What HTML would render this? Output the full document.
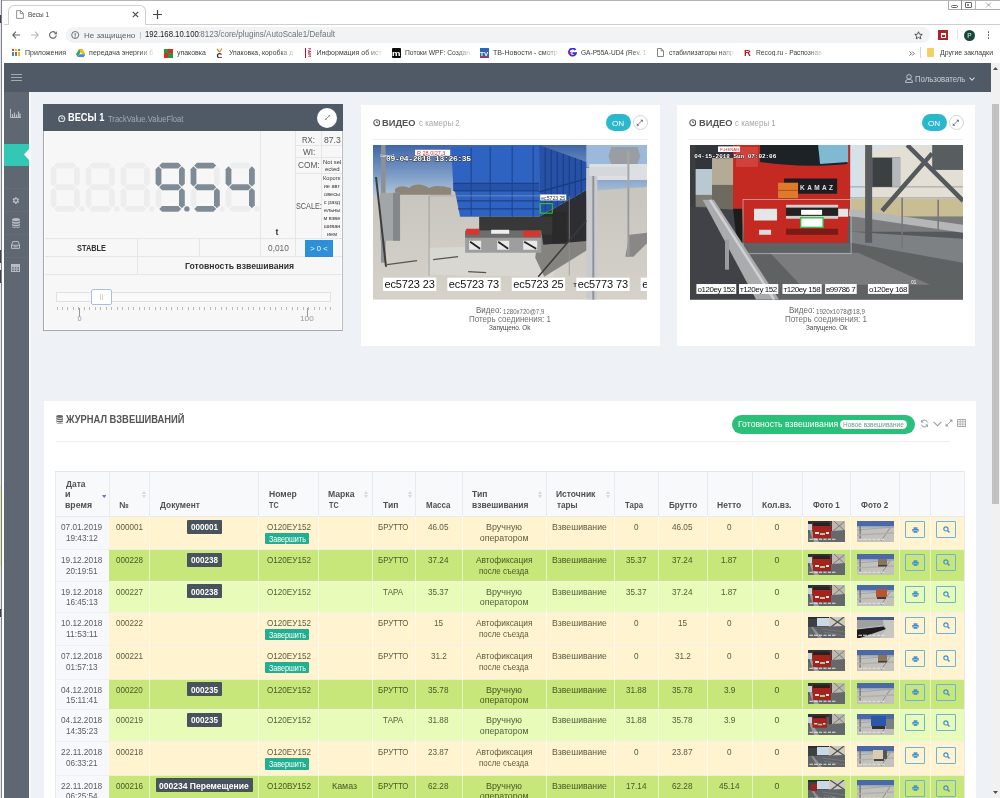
<!DOCTYPE html><html><head><meta charset="utf-8"><title>Весы 1</title><style>
*{margin:0;padding:0;box-sizing:border-box}
html,body{width:1000px;height:798px;overflow:hidden;background:#fff;font-family:"Liberation Sans",sans-serif;position:relative}
.abs{position:absolute}
.t{position:absolute;white-space:nowrap;line-height:1}
</style></head><body>
<svg width="0" height="0" style="position:absolute"><filter id="soft" x="0" y="0" width="100%" height="100%"><feGaussianBlur stdDeviation="0.4"/></filter></svg><div id="root" style="position:absolute;left:0;top:0;width:1000px;height:798px;overflow:hidden;filter:url(#soft)">
<div class="abs" style="left:0;top:0;width:1.2px;height:798px;background:#e6e6ee"></div>
<div class="abs" style="left:0;top:486px;width:1.2px;height:80px;background:#d8eca0"></div>
<div class="abs" style="left:0;top:15px;width:1.2px;height:8px;background:#3c3f58"></div>
<div class="abs" style="left:0;top:250px;width:1.2px;height:13px;background:#3c3f58"></div>
<div class="abs" style="left:0;top:270px;width:1.2px;height:13px;background:#3c3f58"></div>
<div class="abs" style="left:0;top:609px;width:1.2px;height:8px;background:#3c3f58"></div>
<div class="abs" style="left:1.2px;top:0;width:0.9px;height:798px;background:#7d8088"></div>
<div class="abs" style="left:2px;top:0;width:998px;height:1px;background:#b4b4b4"></div>
<div class="abs" style="left:8px;top:5px;width:138px;height:20px;border:1px solid #cfcfcf;border-bottom:none;border-radius:6px 6px 0 0;background:#fff"></div>
<div class="abs" style="left:4px;top:24px;width:5px;height:1px;background:#cfcfcf"></div>
<div class="abs" style="left:145px;top:24px;width:855px;height:1px;background:#cfcfcf"></div>
<svg class="abs" style="left:16px;top:10px" width="8" height="9" viewBox="0 0 8 9"><path d="M0.6 0.6h4l2.8 2.8v5h-6.8z M4.4 0.6v3h3" fill="none" stroke="#888" stroke-width="0.9"/></svg>
<div class="t" style="left:28.48px;top:11.06px;font-size:7.2px;color:#444;font-weight:normal;transform:scaleX(0.895);transform-origin:0 0;">Весы 1</div>
<svg class="abs" style="left:132px;top:11px" width="7" height="7" viewBox="0 0 7 7"><path d="M0.8 0.8l5.4 5.4M6.2 0.8L0.8 6.2" stroke="#444" stroke-width="1.1"/></svg>
<svg class="abs" style="left:153px;top:10px" width="9" height="9" viewBox="0 0 9 9"><path d="M4.5 0v9M0 4.5h9" stroke="#444" stroke-width="1.2"/></svg>
<div class="abs" style="left:947.5px;top:1px;width:53px;height:8.5px;border:1px solid #a9a9a9;border-top:none;border-right:none;background:#fff"></div>
<div class="abs" style="left:961px;top:0;width:1px;height:9.5px;background:#8a8a8a"></div>
<div class="abs" style="left:975px;top:0;width:1px;height:9.5px;background:#b5b5b5"></div>
<div class="abs" style="left:951px;top:5px;width:7px;height:2.6px;border:1px solid #666;border-radius:2px"></div>
<div class="abs" style="left:965px;top:2px;width:7px;height:5.5px;border:1px solid #666;border-radius:1px"></div>
<div class="abs" style="left:967px;top:3.5px;width:2px;height:2.5px;background:#888"></div>
<svg class="abs" style="left:984.5px;top:2px" width="7" height="6" viewBox="0 0 7 6"><path d="M0.8 0.6l5.4 4.8M6.2 0.6L0.8 5.4" stroke="#777" stroke-width="0.9" stroke-dasharray="1 0.6"/></svg>
<svg class="abs" style="left:12px;top:31px" width="8" height="8" viewBox="0 0 8 8"><path d="M8 4H1M4 0.6L0.7 4 4 7.4" fill="none" stroke="#5f6368" stroke-width="1.1"/></svg>
<svg class="abs" style="left:30.5px;top:31px" width="8" height="8" viewBox="0 0 8 8"><path d="M0 4h7M4 0.6L7.3 4 4 7.4" fill="none" stroke="#b5b7ba" stroke-width="1.1"/></svg>
<svg class="abs" style="left:48.5px;top:31px" width="8.5" height="8" viewBox="0 0 8.5 8"><path d="M7.2 4.2a3.3 3.3 0 1 1-1-2.6" fill="none" stroke="#5f6368" stroke-width="1.1"/><path d="M7.8 0.2v3H4.8z" fill="#5f6368"/></svg>
<div class="abs" style="left:65.5px;top:26.8px;width:864px;height:16px;border-radius:8px;background:#f1f3f4"></div>
<svg class="abs" style="left:71px;top:31px" width="9" height="8" viewBox="0 0 9 8"><circle cx="4.2" cy="4" r="3.5" fill="none" stroke="#5f6368" stroke-width="0.9"/><path d="M4.2 2.2v2.6" stroke="#5f6368" stroke-width="1"/><circle cx="4.2" cy="5.9" r="0.55" fill="#5f6368"/></svg>
<div class="t" style="left:84.16px;top:31.89px;font-size:7.4px;color:#5f6368;font-weight:normal;transform:scaleX(1.080);transform-origin:0 0;">Не защищено</div>
<div class="abs" style="left:140px;top:31.5px;width:1px;height:7px;background:#c4c6c8"></div>
<div class="t" style="left:145.42px;top:31.11px;font-size:8.2px;color:#202124;font-weight:normal;transform:scaleX(0.945);transform-origin:0 0;">192.168.10.100</div>
<div class="t" style="left:198.47px;top:31.11px;font-size:8.2px;color:#6f7377;font-weight:normal;transform:scaleX(0.984);transform-origin:0 0;">:8123/core/plugins/AutoScale1/Default</div>
<svg class="abs" style="left:914px;top:31px" width="9" height="9" viewBox="0 0 24 24"><path d="M12 2l2.9 6.6 7.1.6-5.4 4.7 1.7 7-6.3-3.8-6.3 3.8 1.7-7L2 9.2l7.1-.6z" fill="none" stroke="#444" stroke-width="2.4"/></svg>
<div class="abs" style="left:938px;top:30px;width:10px;height:10px;background:#b0202c"></div>
<div class="abs" style="left:940.5px;top:32.5px;width:5px;height:5px;border:1px solid #fff;border-top-width:2px"></div>
<div class="abs" style="left:957px;top:30px;width:1px;height:9px;background:#e2e2e2"></div>
<div class="abs" style="left:964px;top:29.5px;width:11px;height:11px;border-radius:6px;background:#16493a"></div>
<div class="t" style="left:967.28px;top:32.55px;font-size:6.5px;color:#e8f0ec;font-weight:normal;">P</div>
<div class="abs" style="left:987.5px;top:31px;width:1.6px;height:1.6px;background:#555;border-radius:1px"></div>
<div class="abs" style="left:987.5px;top:34px;width:1.6px;height:1.6px;background:#555;border-radius:1px"></div>
<div class="abs" style="left:987.5px;top:37px;width:1.6px;height:1.6px;background:#555;border-radius:1px"></div>
<div class="abs" style="left:12px;top:49.0px;width:2px;height:2px;background:#ea4335"></div>
<div class="abs" style="left:15px;top:49.0px;width:2px;height:2px;background:#fbbc04"></div>
<div class="abs" style="left:18px;top:49.0px;width:2px;height:2px;background:#34a853"></div>
<div class="abs" style="left:12px;top:51.7px;width:2px;height:2px;background:#4285f4"></div>
<div class="abs" style="left:15px;top:51.7px;width:2px;height:2px;background:#ea4335"></div>
<div class="abs" style="left:18px;top:51.7px;width:2px;height:2px;background:#fbbc04"></div>
<div class="abs" style="left:12px;top:54.4px;width:2px;height:2px;background:#34a853"></div>
<div class="abs" style="left:15px;top:54.4px;width:2px;height:2px;background:#4285f4"></div>
<div class="abs" style="left:18px;top:54.4px;width:2px;height:2px;background:#fbbc04"></div>
<div class="t" style="left:25.04px;top:49.32px;font-size:7px;color:#3c3c3c;font-weight:normal;">Приложения</div>
<svg class="abs" style="left:75.5px;top:48.5px" width="9.5" height="8" viewBox="0 0 9.5 8"><path d="M3 0h3.5l3 5.2H6z" fill="#fbbc04"/><path d="M3 0L0 5.2 1.7 8 4.7 2.8z" fill="#34a853"/><path d="M1.7 8h6.1l1.7-2.8H3.4z" fill="#4285f4"/></svg>
<div class="t" style="left:89.11px;top:49.32px;font-size:7px;color:#3c3c3c;font-weight:normal;-webkit-mask-image:linear-gradient(to right,#000 78%,rgba(0,0,0,0.15));">передача энергии б</div>
<div class="abs" style="left:163.6px;top:48.5px;width:9px;height:9px;background:#e8262a"></div><div class="abs" style="left:163.6px;top:48.5px;width:4.5px;height:4.5px;background:#1f9d3a"></div><div class="abs" style="left:168.1px;top:53px;width:4.5px;height:4.5px;background:#1f9d3a"></div>
<div class="t" style="left:176.77px;top:49.32px;font-size:7px;color:#3c3c3c;font-weight:normal;transform:scaleX(0.993);transform-origin:0 0;">упаковка</div>
<svg class="abs" style="left:216px;top:47.5px" width="7" height="10" viewBox="0 0 7 10"><path d="M1 1l2.5 3M6 0.5L3.5 4" stroke="#d9822b" stroke-width="1.2"/><path d="M5.5 6.5a2.2 2.2 0 1 0 0 2.5" fill="none" stroke="#333" stroke-width="1.3"/></svg>
<div class="t" style="left:228.79px;top:49.32px;font-size:7px;color:#3c3c3c;font-weight:normal;transform:scaleX(0.982);transform-origin:0 0;-webkit-mask-image:linear-gradient(to right,#000 78%,rgba(0,0,0,0.15));">Упаковка, коробка д</div>
<div class="abs" style="left:305px;top:48px;width:5px;height:10px;border-left:1.5px solid #c8102e;"></div>
<div class="t" style="left:306.5px;top:48px;font-size:4px;color:#c8102e;writing-mode:vertical-rl;font-weight:bold">FAIR</div>
<div class="t" style="left:316.44px;top:49.32px;font-size:7px;color:#3c3c3c;font-weight:normal;-webkit-mask-image:linear-gradient(to right,#000 78%,rgba(0,0,0,0.15));">Информация об ист</div>
<div class="abs" style="left:391.5px;top:48px;width:9.5px;height:9.5px;background:#111;border-radius:1px"></div>
<div class="t" style="left:391.98px;top:49.88px;font-size:8px;color:#fff;font-weight:bold;transform:scaleX(1.193);transform-origin:0 0;">m</div>
<div class="t" style="left:404.66px;top:49.32px;font-size:7px;color:#3c3c3c;font-weight:normal;transform:scaleX(0.957);transform-origin:0 0;-webkit-mask-image:linear-gradient(to right,#000 78%,rgba(0,0,0,0.15));">Потоки WPF: Создан</div>
<div class="abs" style="left:479.5px;top:48px;width:9.5px;height:9.5px;background:#2e63b5"></div>
<div class="t" style="left:480.24px;top:50.97px;font-size:6px;color:#fff;font-weight:bold;transform:scaleX(1.058);transform-origin:0 0;">TV</div>
<div class="abs" style="left:479.5px;top:56.5px;width:9.5px;height:1px;background:#d22"></div>
<div class="t" style="left:493.06px;top:49.32px;font-size:7px;color:#3c3c3c;font-weight:normal;transform:scaleX(1.016);transform-origin:0 0;-webkit-mask-image:linear-gradient(to right,#000 78%,rgba(0,0,0,0.15));">ТВ-Новости - смотр</div>
<svg class="abs" style="left:568px;top:48px" width="9" height="9" viewBox="0 0 9 9"><path d="M7.5 2A3.6 3.6 0 1 0 8 5.2H4.5" fill="none" stroke="#3b2fe0" stroke-width="1.8"/><path d="M0.5 5.5l3-1" stroke="#e0203a" stroke-width="1.5"/></svg>
<div class="t" style="left:581.37px;top:49.32px;font-size:7px;color:#3c3c3c;font-weight:normal;transform:scaleX(0.937);transform-origin:0 0;-webkit-mask-image:linear-gradient(to right,#000 78%,rgba(0,0,0,0.15));">GA-P55A-UD4 (Rev. 1</div>
<svg class="abs" style="left:657px;top:48px" width="7" height="9" viewBox="0 0 7 9"><path d="M0.5 0.5h3.7l2.3 2.3v5.7h-6z M4.2 0.5v2.3h2.3" fill="none" stroke="#777" stroke-width="0.9"/></svg>
<div class="t" style="left:669.23px;top:49.32px;font-size:7px;color:#3c3c3c;font-weight:normal;transform:scaleX(0.969);transform-origin:0 0;-webkit-mask-image:linear-gradient(to right,#000 78%,rgba(0,0,0,0.15));">стабилизаторы напр</div>
<div class="t" style="left:743.89px;top:49.13px;font-size:9px;color:#c8141e;font-weight:bold;transform:scaleX(1.050);transform-origin:0 0;">R</div>
<div class="t" style="left:756.46px;top:49.32px;font-size:7px;color:#3c3c3c;font-weight:normal;transform:scaleX(0.957);transform-origin:0 0;-webkit-mask-image:linear-gradient(to right,#000 78%,rgba(0,0,0,0.15));">Recog.ru - Распознав</div>
<svg class="abs" style="left:909px;top:50.5px" width="6" height="5" viewBox="0 0 6 5"><path d="M0.5 0.5l2 2-2 2M3.2 0.5l2 2-2 2" fill="none" stroke="#555" stroke-width="0.9"/></svg>
<div class="abs" style="left:920px;top:47px;width:1px;height:11px;background:#d6d6d6"></div>
<div class="abs" style="left:926.5px;top:48.2px;width:7px;height:9px;background:#f5cf66;border-radius:1px"></div>
<div class="t" style="left:939.97px;top:49.32px;font-size:7px;color:#3c3c3c;font-weight:normal;transform:scaleX(0.988);transform-origin:0 0;">Другие закладки</div>
<div class="abs" style="left:4px;top:63px;width:987px;height:29px;background:#4f5a66"></div>
<div class="abs" style="left:11px;top:74px;width:11px;height:1px;background:#a3aab2"></div>
<div class="abs" style="left:11px;top:77px;width:11px;height:1px;background:#a3aab2"></div>
<div class="abs" style="left:11px;top:80px;width:11px;height:1px;background:#a3aab2"></div>
<svg class="abs" style="left:904.8px;top:74px" width="8" height="9" viewBox="0 0 9 10"><circle cx="4.5" cy="3.2" r="2.6" fill="none" stroke="#c9ced4" stroke-width="1"/><path d="M0.6 9.4c0-2.6 1.6-3.6 3.9-3.6s3.9 1 3.9 3.6z" fill="none" stroke="#c9ced4" stroke-width="1"/></svg>
<div class="t" style="left:914.88px;top:75.17px;font-size:8.6px;color:#c9ced4;font-weight:normal;transform:scaleX(0.904);transform-origin:0 0;">Пользователь</div>
<svg class="abs" style="left:969px;top:77px" width="6" height="4" viewBox="0 0 6 4"><path d="M0.5 0.6L3 3.2 5.5 0.6" fill="none" stroke="#c9ced4" stroke-width="1.1"/></svg>
<div class="abs" style="left:4px;top:92px;width:25px;height:706px;background:#5f6772"></div>
<div class="abs" style="left:29px;top:92px;width:2px;height:706px;background:#f7f8fa"></div>
<div class="abs" style="left:31px;top:92px;width:960px;height:706px;background:#eef1f5"></div>
<div class="abs" style="left:991px;top:63px;width:9px;height:735px;background:#f1f1f1"></div>
<div class="abs" style="left:992px;top:104px;width:7px;height:400px;background:#c1c1c1"></div>
<svg class="abs" style="left:993px;top:66.5px" width="5" height="3" viewBox="0 0 5 3"><path d="M0 3L2.5 0 5 3z" fill="#505050"/></svg>
<svg class="abs" style="left:993px;top:791px" width="5" height="3" viewBox="0 0 5 3"><path d="M0 0L2.5 3 5 0z" fill="#505050"/></svg>
<div class="abs" style="left:4px;top:92px;width:25px;height:0px"></div>
<svg class="abs" style="left:10px;top:109px" width="11" height="9" viewBox="0 0 11 9"><path d="M0.5 0v8.5H11" fill="none" stroke="#b9bec5" stroke-width="1"/><path d="M2.5 8V5M4.5 8V3.5M6.5 8V5.5M8.5 8V2.5M10 8V4.5" stroke="#b9bec5" stroke-width="1.2"/></svg>
<div class="abs" style="left:4px;top:143.5px;width:25px;height:22px;background:#33c8b3"></div>
<svg class="abs" style="left:24px;top:149px" width="5" height="11" viewBox="0 0 5 11"><path d="M5 0L0 5.5 5 11z" fill="#f3f5f8"/></svg>
<div class="abs" style="left:4px;top:188px;width:25px;height:1px;background:#656c75"></div>
<div class="abs" style="left:4px;top:211.4px;width:25px;height:1px;background:#656c75"></div>
<div class="abs" style="left:4px;top:234.4px;width:25px;height:1px;background:#656c75"></div>
<div class="abs" style="left:4px;top:257px;width:25px;height:1px;background:#656c75"></div>
<svg class="abs" style="left:11px;top:195.5px" width="9" height="9" viewBox="0 0 24 24"><path fill="#b9bec5" d="M19.4 13a7.5 7.5 0 0 0 0-2l2.1-1.6-2-3.5-2.5 1a7.3 7.3 0 0 0-1.7-1L15 3h-4l-.4 2.6a7.3 7.3 0 0 0-1.7 1l-2.5-1-2 3.5L6.5 11a7.5 7.5 0 0 0 0 2l-2.1 1.6 2 3.5 2.5-1a7.3 7.3 0 0 0 1.7 1L11 21h4l.4-2.6a7.3 7.3 0 0 0 1.7-1l2.5 1 2-3.5zM13 15.5a3.5 3.5 0 1 1 0-7 3.5 3.5 0 0 1 0 7z"/></svg>
<svg class="abs" style="left:11.5px;top:217.5px" width="8" height="10" viewBox="0 0 8 10"><ellipse cx="4" cy="1.6" rx="4" ry="1.6" fill="#b9bec5"/><path d="M0 2.6c0 .9 1.8 1.6 4 1.6s4-.7 4-1.6v1.6c0 .9-1.8 1.6-4 1.6S0 5.1 0 4.2z" fill="#b9bec5"/><path d="M0 5.2c0 .9 1.8 1.6 4 1.6s4-.7 4-1.6v1.6c0 .9-1.8 1.6-4 1.6S0 7.7 0 6.8z" fill="#b9bec5"/><path d="M0 7.8c0 .9 1.8 1.6 4 1.6s4-.7 4-1.6v.6c0 .9-1.8 1.6-4 1.6S0 9.3 0 8.4z" fill="#b9bec5"/></svg>
<svg class="abs" style="left:11px;top:241px" width="9" height="8" viewBox="0 0 9 8"><path d="M1.8 0.6h5.4L8.5 4v3.4H0.5V4z" fill="none" stroke="#b9bec5" stroke-width="1"/><path d="M0.5 4.2h8M2.5 5.8h4" stroke="#b9bec5" stroke-width="1"/></svg>
<svg class="abs" style="left:11px;top:264px" width="9" height="8" viewBox="0 0 9 8"><rect x="0.5" y="0.5" width="8" height="7" fill="none" stroke="#b9bec5" stroke-width="1"/><path d="M0.5 2.8h8M0.5 5.1h8M3.2 0.5v7M5.8 0.5v7" stroke="#b9bec5" stroke-width="1"/><rect x="0.5" y="0.5" width="8" height="2.3" fill="#b9bec5"/></svg>
<div class="abs" style="left:43px;top:104px;width:300px;height:227px;background:#f7f7f7;border:1px solid #a3a8ad;border-top:none;border-right-color:#b9bdc1"></div>
<div class="abs" style="left:44px;top:104px;width:298px;height:226px;border:1px solid #fff;border-top:none"></div>
<div class="abs" style="left:43px;top:104px;width:300px;height:27px;background:#4f5a66"></div>
<svg class="abs" style="left:58px;top:114.5px" width="7.5" height="7.5" viewBox="0 0 8 8"><circle cx="4" cy="4" r="3.2" fill="none" stroke="#e6e9ec" stroke-width="1.2"/><path d="M4 2.2V4h1.6" fill="none" stroke="#e6e9ec" stroke-width="1"/></svg>
<div class="t" style="left:67.90px;top:113.42px;font-size:10.2px;color:#ffffff;font-weight:bold;transform:scaleX(0.908);transform-origin:0 0;">ВЕСЫ 1</div>
<div class="t" style="left:107.85px;top:114.60px;font-size:8.8px;color:#9eabb8;font-weight:normal;transform:scaleX(0.863);transform-origin:0 0;">TrackValue.ValueFloat</div>
<div class="abs" style="left:317px;top:107.5px;width:20px;height:20px;border-radius:10px;background:#fff"></div>
<svg class="abs" style="left:323.5px;top:114px" width="7" height="7" viewBox="0 0 9 9"><path d="M1.5 7.5l6-6" stroke="#8a8a8a" stroke-width="1.1"/><path d="M5.2 1.2h2.6v2.6zM1.2 5.2v2.6h2.6z" fill="#8a8a8a"/></svg>
<div class="abs" style="left:260px;top:131px;width:1px;height:107px;background:#e6e6e6"></div>
<div class="abs" style="left:295px;top:131px;width:1px;height:107px;background:#e6e6e6"></div>
<div class="abs" style="left:321px;top:131px;width:1px;height:107px;background:#e6e6e6"></div>
<div class="abs" style="left:295px;top:145px;width:47px;height:1px;background:#e6e6e6"></div>
<div class="abs" style="left:295px;top:157px;width:47px;height:1px;background:#e6e6e6"></div>
<div class="abs" style="left:295px;top:173px;width:47px;height:1px;background:#e6e6e6"></div>
<div class="abs" style="left:45px;top:238px;width:297px;height:1px;background:#e6e6e6"></div>
<div class="abs" style="left:45px;top:256px;width:297px;height:1px;background:#e6e6e6"></div>
<div class="abs" style="left:45px;top:274px;width:297px;height:1px;background:#e6e6e6"></div>
<div class="abs" style="left:137px;top:238px;width:1px;height:36px;background:#e6e6e6"></div>
<div class="abs" style="left:198.5px;top:238px;width:1px;height:18px;background:#e6e6e6"></div>
<div class="abs" style="left:260px;top:238px;width:1px;height:18px;background:#e6e6e6"></div>
<div class="abs" style="left:295px;top:238px;width:1px;height:18px;background:#e6e6e6"></div>
<div class="t" style="left:301.98px;top:136.20px;font-size:8.8px;color:#555;font-weight:normal;transform:scaleX(0.882);transform-origin:0 0;">RX:</div>
<div class="t" style="left:323.61px;top:136.20px;font-size:8.8px;color:#555;font-weight:normal;transform:scaleX(0.978);transform-origin:0 0;">87.3</div>
<div class="t" style="left:302.56px;top:147.50px;font-size:8.8px;color:#555;font-weight:normal;transform:scaleX(0.942);transform-origin:0 0;">WI:</div>
<div class="t" style="left:298.19px;top:161.30px;font-size:8.8px;color:#555;font-weight:normal;transform:scaleX(0.939);transform-origin:0 0;">COM:</div>
<div class="t" style="left:322.58px;top:159.78px;font-size:5.4px;color:#3a3a3a;font-weight:normal;transform:scaleX(1.093);transform-origin:0 0;">Not sel</div>
<div class="t" style="left:324.76px;top:167.28px;font-size:5.4px;color:#3a3a3a;font-weight:normal;transform:scaleX(1.108);transform-origin:0 0;">ected</div>
<div class="t" style="left:295.67px;top:202.00px;font-size:8.8px;color:#555;font-weight:normal;transform:scaleX(0.824);transform-origin:0 0;">SCALE:</div>
<div class="t" style="left:323.03px;top:175.91px;font-size:5.6px;color:#3a3a3a;font-weight:normal;">Коротк</div>
<div class="t" style="left:323.68px;top:183.91px;font-size:5.6px;color:#3a3a3a;font-weight:normal;">ие авт</div>
<div class="t" style="left:324.10px;top:191.91px;font-size:5.6px;color:#3a3a3a;font-weight:normal;">овесы</div>
<div class="t" style="left:323.82px;top:199.91px;font-size:5.6px;color:#3a3a3a;font-weight:normal;">с разд</div>
<div class="t" style="left:323.96px;top:207.91px;font-size:5.6px;color:#3a3a3a;font-weight:normal;">ельны</div>
<div class="t" style="left:323.47px;top:215.91px;font-size:5.6px;color:#3a3a3a;font-weight:normal;">м взве</div>
<div class="t" style="left:323.63px;top:223.91px;font-size:5.6px;color:#3a3a3a;font-weight:normal;">шиван</div>
<div class="t" style="left:326.95px;top:231.91px;font-size:5.6px;color:#3a3a3a;font-weight:normal;">ием</div>
<div class="t" style="left:275.55px;top:228.10px;font-size:8.8px;color:#333;font-weight:bold;">t</div>
<div class="t" style="left:267.67px;top:244.40px;font-size:8.8px;color:#666;font-weight:normal;transform:scaleX(0.947);transform-origin:0 0;">0,010</div>
<div class="abs" style="left:305px;top:239.5px;width:28px;height:17px;background:#2f8fd9"></div>
<div class="t" style="left:310.34px;top:245.22px;font-size:7.6px;color:#fff;font-weight:normal;">&gt; 0 &lt;</div>
<div class="t" style="left:76.53px;top:244.03px;font-size:9px;color:#333;font-weight:bold;transform:scaleX(0.820);transform-origin:0 0;">STABLE</div>
<div class="t" style="left:185.09px;top:261.53px;font-size:9px;color:#333;font-weight:bold;transform:scaleX(0.960);transform-origin:0 0;">Готовность взвешивания</div>
<div class="abs" style="left:56px;top:292px;width:275px;height:10px;border:1px solid #e2e2e2;background:#f9f9f9"></div>
<div class="abs" style="left:91px;top:288.5px;width:20.5px;height:16.5px;border:1.5px solid #a8c0dc;border-radius:2px;background:#fff"></div>
<div class="abs" style="left:100px;top:293.5px;width:1px;height:6px;background:#d5d5d5"></div><div class="abs" style="left:102px;top:293.5px;width:1px;height:6px;background:#d5d5d5"></div>
<div class="abs" style="left:56.50px;top:307.2px;width:1px;height:3px;background:#b8b8b8"></div>
<div class="abs" style="left:61.97px;top:307.2px;width:1px;height:3px;background:#b8b8b8"></div>
<div class="abs" style="left:67.44px;top:307.2px;width:1px;height:3px;background:#b8b8b8"></div>
<div class="abs" style="left:72.91px;top:307.2px;width:1px;height:3px;background:#b8b8b8"></div>
<div class="abs" style="left:78.38px;top:307.2px;width:1px;height:3px;background:#b8b8b8"></div>
<div class="abs" style="left:83.85px;top:307.2px;width:1px;height:3px;background:#b8b8b8"></div>
<div class="abs" style="left:89.32px;top:307.2px;width:1px;height:3px;background:#b8b8b8"></div>
<div class="abs" style="left:94.79px;top:307.2px;width:1px;height:3px;background:#b8b8b8"></div>
<div class="abs" style="left:100.26px;top:307.2px;width:1px;height:3px;background:#b8b8b8"></div>
<div class="abs" style="left:105.73px;top:307.2px;width:1px;height:3px;background:#b8b8b8"></div>
<div class="abs" style="left:111.20px;top:307.2px;width:1px;height:3px;background:#b8b8b8"></div>
<div class="abs" style="left:116.67px;top:307.2px;width:1px;height:3px;background:#b8b8b8"></div>
<div class="abs" style="left:122.14px;top:307.2px;width:1px;height:3px;background:#b8b8b8"></div>
<div class="abs" style="left:127.61px;top:307.2px;width:1px;height:3px;background:#b8b8b8"></div>
<div class="abs" style="left:133.08px;top:307.2px;width:1px;height:3px;background:#b8b8b8"></div>
<div class="abs" style="left:138.55px;top:307.2px;width:1px;height:3px;background:#b8b8b8"></div>
<div class="abs" style="left:144.02px;top:307.2px;width:1px;height:3px;background:#b8b8b8"></div>
<div class="abs" style="left:149.49px;top:307.2px;width:1px;height:3px;background:#b8b8b8"></div>
<div class="abs" style="left:154.96px;top:307.2px;width:1px;height:3px;background:#b8b8b8"></div>
<div class="abs" style="left:160.43px;top:307.2px;width:1px;height:3px;background:#b8b8b8"></div>
<div class="abs" style="left:165.90px;top:307.2px;width:1px;height:3px;background:#b8b8b8"></div>
<div class="abs" style="left:171.37px;top:307.2px;width:1px;height:3px;background:#b8b8b8"></div>
<div class="abs" style="left:176.84px;top:307.2px;width:1px;height:3px;background:#b8b8b8"></div>
<div class="abs" style="left:182.31px;top:307.2px;width:1px;height:3px;background:#b8b8b8"></div>
<div class="abs" style="left:187.78px;top:307.2px;width:1px;height:3px;background:#b8b8b8"></div>
<div class="abs" style="left:193.25px;top:307.2px;width:1px;height:3px;background:#b8b8b8"></div>
<div class="abs" style="left:198.72px;top:307.2px;width:1px;height:3px;background:#b8b8b8"></div>
<div class="abs" style="left:204.19px;top:307.2px;width:1px;height:3px;background:#b8b8b8"></div>
<div class="abs" style="left:209.66px;top:307.2px;width:1px;height:3px;background:#b8b8b8"></div>
<div class="abs" style="left:215.13px;top:307.2px;width:1px;height:3px;background:#b8b8b8"></div>
<div class="abs" style="left:220.60px;top:307.2px;width:1px;height:3px;background:#b8b8b8"></div>
<div class="abs" style="left:226.07px;top:307.2px;width:1px;height:3px;background:#b8b8b8"></div>
<div class="abs" style="left:231.54px;top:307.2px;width:1px;height:3px;background:#b8b8b8"></div>
<div class="abs" style="left:237.01px;top:307.2px;width:1px;height:3px;background:#b8b8b8"></div>
<div class="abs" style="left:242.48px;top:307.2px;width:1px;height:3px;background:#b8b8b8"></div>
<div class="abs" style="left:247.95px;top:307.2px;width:1px;height:3px;background:#b8b8b8"></div>
<div class="abs" style="left:253.42px;top:307.2px;width:1px;height:3px;background:#b8b8b8"></div>
<div class="abs" style="left:258.89px;top:307.2px;width:1px;height:3px;background:#b8b8b8"></div>
<div class="abs" style="left:264.36px;top:307.2px;width:1px;height:3px;background:#b8b8b8"></div>
<div class="abs" style="left:269.83px;top:307.2px;width:1px;height:3px;background:#b8b8b8"></div>
<div class="abs" style="left:275.30px;top:307.2px;width:1px;height:3px;background:#b8b8b8"></div>
<div class="abs" style="left:280.77px;top:307.2px;width:1px;height:3px;background:#b8b8b8"></div>
<div class="abs" style="left:286.24px;top:307.2px;width:1px;height:3px;background:#b8b8b8"></div>
<div class="abs" style="left:291.71px;top:307.2px;width:1px;height:3px;background:#b8b8b8"></div>
<div class="abs" style="left:297.18px;top:307.2px;width:1px;height:3px;background:#b8b8b8"></div>
<div class="abs" style="left:302.65px;top:307.2px;width:1px;height:3px;background:#b8b8b8"></div>
<div class="abs" style="left:308.12px;top:307.2px;width:1px;height:3px;background:#b8b8b8"></div>
<div class="abs" style="left:313.59px;top:307.2px;width:1px;height:3px;background:#b8b8b8"></div>
<div class="abs" style="left:319.06px;top:307.2px;width:1px;height:3px;background:#b8b8b8"></div>
<div class="abs" style="left:324.53px;top:307.2px;width:1px;height:3px;background:#b8b8b8"></div>
<div class="abs" style="left:330.00px;top:307.2px;width:1px;height:3px;background:#b8b8b8"></div>
<div class="abs" style="left:79px;top:307.5px;width:1px;height:9px;background:#999"></div>
<div class="abs" style="left:306.5px;top:307.5px;width:1px;height:9px;background:#999"></div>
<div class="t" style="left:77.46px;top:315.47px;font-size:7.3px;color:#999;font-weight:normal;">0</div>
<div class="t" style="left:300.48px;top:315.47px;font-size:7.3px;color:#999;font-weight:normal;transform:scaleX(1.128);transform-origin:0 0;">100</div>
<svg class="abs" style="left:45px;top:131px" width="215" height="107" viewBox="0 0 215 107"><path d="M9.20 34.60 L12.10 31.70 L28.30 31.70 L31.20 34.60 L28.30 37.50 L12.10 37.50Z" fill="#ededed"/><path d="M9.20 56.25 L12.10 53.35 L28.30 53.35 L31.20 56.25 L28.30 59.15 L12.10 59.15Z" fill="#ededed"/><path d="M9.20 77.90 L12.10 75.00 L28.30 75.00 L31.20 77.90 L28.30 80.80 L12.10 80.80Z" fill="#ededed"/><path d="M8.50 35.30 L11.40 38.20 L11.40 52.65 L8.50 55.55 L5.60 52.65 L5.60 38.20Z" fill="#ededed"/><path d="M31.90 35.30 L34.80 38.20 L34.80 52.65 L31.90 55.55 L29.00 52.65 L29.00 38.20Z" fill="#ededed"/><path d="M8.50 56.95 L11.40 59.85 L11.40 74.30 L8.50 77.20 L5.60 74.30 L5.60 59.85Z" fill="#ededed"/><path d="M31.90 56.95 L34.80 59.85 L34.80 74.30 L31.90 77.20 L29.00 74.30 L29.00 59.85Z" fill="#ededed"/><circle cx="36.90" cy="77.90" r="2.7" fill="#ededed"/><path d="M44.20 34.60 L47.10 31.70 L63.30 31.70 L66.20 34.60 L63.30 37.50 L47.10 37.50Z" fill="#ededed"/><path d="M44.20 56.25 L47.10 53.35 L63.30 53.35 L66.20 56.25 L63.30 59.15 L47.10 59.15Z" fill="#ededed"/><path d="M44.20 77.90 L47.10 75.00 L63.30 75.00 L66.20 77.90 L63.30 80.80 L47.10 80.80Z" fill="#ededed"/><path d="M43.50 35.30 L46.40 38.20 L46.40 52.65 L43.50 55.55 L40.60 52.65 L40.60 38.20Z" fill="#ededed"/><path d="M66.90 35.30 L69.80 38.20 L69.80 52.65 L66.90 55.55 L64.00 52.65 L64.00 38.20Z" fill="#ededed"/><path d="M43.50 56.95 L46.40 59.85 L46.40 74.30 L43.50 77.20 L40.60 74.30 L40.60 59.85Z" fill="#ededed"/><path d="M66.90 56.95 L69.80 59.85 L69.80 74.30 L66.90 77.20 L64.00 74.30 L64.00 59.85Z" fill="#ededed"/><circle cx="71.90" cy="77.90" r="2.7" fill="#ededed"/><path d="M79.20 34.60 L82.10 31.70 L98.30 31.70 L101.20 34.60 L98.30 37.50 L82.10 37.50Z" fill="#ededed"/><path d="M79.20 56.25 L82.10 53.35 L98.30 53.35 L101.20 56.25 L98.30 59.15 L82.10 59.15Z" fill="#ededed"/><path d="M79.20 77.90 L82.10 75.00 L98.30 75.00 L101.20 77.90 L98.30 80.80 L82.10 80.80Z" fill="#ededed"/><path d="M78.50 35.30 L81.40 38.20 L81.40 52.65 L78.50 55.55 L75.60 52.65 L75.60 38.20Z" fill="#ededed"/><path d="M101.90 35.30 L104.80 38.20 L104.80 52.65 L101.90 55.55 L99.00 52.65 L99.00 38.20Z" fill="#ededed"/><path d="M78.50 56.95 L81.40 59.85 L81.40 74.30 L78.50 77.20 L75.60 74.30 L75.60 59.85Z" fill="#ededed"/><path d="M101.90 56.95 L104.80 59.85 L104.80 74.30 L101.90 77.20 L99.00 74.30 L99.00 59.85Z" fill="#ededed"/><circle cx="106.90" cy="77.90" r="2.7" fill="#ededed"/><path d="M114.20 34.60 L117.10 31.70 L133.30 31.70 L136.20 34.60 L133.30 37.50 L117.10 37.50Z" fill="#7f8c97"/><path d="M114.20 56.25 L117.10 53.35 L133.30 53.35 L136.20 56.25 L133.30 59.15 L117.10 59.15Z" fill="#7f8c97"/><path d="M114.20 77.90 L117.10 75.00 L133.30 75.00 L136.20 77.90 L133.30 80.80 L117.10 80.80Z" fill="#7f8c97"/><path d="M113.50 35.30 L116.40 38.20 L116.40 52.65 L113.50 55.55 L110.60 52.65 L110.60 38.20Z" fill="#7f8c97"/><path d="M136.90 35.30 L139.80 38.20 L139.80 52.65 L136.90 55.55 L134.00 52.65 L134.00 38.20Z" fill="#7f8c97"/><path d="M113.50 56.95 L116.40 59.85 L116.40 74.30 L113.50 77.20 L110.60 74.30 L110.60 59.85Z" fill="#ededed"/><path d="M136.90 56.95 L139.80 59.85 L139.80 74.30 L136.90 77.20 L134.00 74.30 L134.00 59.85Z" fill="#7f8c97"/><circle cx="141.90" cy="77.90" r="2.7" fill="#7f8c97"/><path d="M149.20 34.60 L152.10 31.70 L168.30 31.70 L171.20 34.60 L168.30 37.50 L152.10 37.50Z" fill="#7f8c97"/><path d="M149.20 56.25 L152.10 53.35 L168.30 53.35 L171.20 56.25 L168.30 59.15 L152.10 59.15Z" fill="#7f8c97"/><path d="M149.20 77.90 L152.10 75.00 L168.30 75.00 L171.20 77.90 L168.30 80.80 L152.10 80.80Z" fill="#7f8c97"/><path d="M148.50 35.30 L151.40 38.20 L151.40 52.65 L148.50 55.55 L145.60 52.65 L145.60 38.20Z" fill="#7f8c97"/><path d="M171.90 35.30 L174.80 38.20 L174.80 52.65 L171.90 55.55 L169.00 52.65 L169.00 38.20Z" fill="#ededed"/><path d="M148.50 56.95 L151.40 59.85 L151.40 74.30 L148.50 77.20 L145.60 74.30 L145.60 59.85Z" fill="#ededed"/><path d="M171.90 56.95 L174.80 59.85 L174.80 74.30 L171.90 77.20 L169.00 74.30 L169.00 59.85Z" fill="#7f8c97"/><circle cx="176.90" cy="77.90" r="2.7" fill="#ededed"/><path d="M184.20 34.60 L187.10 31.70 L203.30 31.70 L206.20 34.60 L203.30 37.50 L187.10 37.50Z" fill="#ededed"/><path d="M184.20 56.25 L187.10 53.35 L203.30 53.35 L206.20 56.25 L203.30 59.15 L187.10 59.15Z" fill="#7f8c97"/><path d="M184.20 77.90 L187.10 75.00 L203.30 75.00 L206.20 77.90 L203.30 80.80 L187.10 80.80Z" fill="#ededed"/><path d="M183.50 35.30 L186.40 38.20 L186.40 52.65 L183.50 55.55 L180.60 52.65 L180.60 38.20Z" fill="#7f8c97"/><path d="M206.90 35.30 L209.80 38.20 L209.80 52.65 L206.90 55.55 L204.00 52.65 L204.00 38.20Z" fill="#7f8c97"/><path d="M183.50 56.95 L186.40 59.85 L186.40 74.30 L183.50 77.20 L180.60 74.30 L180.60 59.85Z" fill="#ededed"/><path d="M206.90 56.95 L209.80 59.85 L209.80 74.30 L206.90 77.20 L204.00 74.30 L204.00 59.85Z" fill="#7f8c97"/><circle cx="211.90" cy="77.90" r="2.7" fill="#ededed"/></svg>
<div class="abs" style="left:361px;top:104.5px;width:298.6px;height:241px;background:#fff"></div>
<svg class="abs" style="left:372.5px;top:119px" width="7.5" height="7.5" viewBox="0 0 8 8"><circle cx="4" cy="4" r="3.2" fill="none" stroke="#555" stroke-width="1.1"/><path d="M4 2.2V4h1.6" fill="none" stroke="#555" stroke-width="1"/></svg>
<div class="t" style="left:382.39px;top:118.12px;font-size:9.6px;color:#555;font-weight:bold;transform:scaleX(0.970);transform-origin:0 0;">ВИДЕО</div>
<div class="t" style="left:418.68px;top:118.97px;font-size:8.6px;color:#a5a9ad;font-weight:normal;transform:scaleX(0.920);transform-origin:0 0;">с камеры 2</div>
<div class="abs" style="left:372px;top:139px;width:275.6px;height:1px;background:#eeeeee"></div>
<div class="abs" style="left:606.1px;top:114.4px;width:24.5px;height:16.8px;border-radius:9px;background:#2cb8cc"></div>
<div class="t" style="left:612.43px;top:119.93px;font-size:7.7px;color:#fff;font-weight:normal;transform:scaleX(1.058);transform-origin:0 0;">ON</div>
<div class="abs" style="left:632.6px;top:115px;width:15.2px;height:15.4px;border-radius:8px;border:1px solid #d5d5d5;background:#fff"></div>
<svg class="abs" style="left:636.4px;top:119px" width="7.5" height="7.5" viewBox="0 0 8 8"><path d="M1.5 6.5l5-5" stroke="#666" stroke-width="0.9"/><path d="M4.6 0.8h2.6v2.6zM0.8 4.6v2.6h2.6z" fill="#666"/></svg>
<svg class="abs" style="left:372.8px;top:145.2px" width="274.4" height="154.6" viewBox="0 0 274 155" preserveAspectRatio="none"><defs><linearGradient id="sky1" x1="0" y1="0" x2="0" y2="1"><stop offset="0" stop-color="#3f66a8"/><stop offset="0.6" stop-color="#7f9fc8"/><stop offset="1" stop-color="#b7c8da"/></linearGradient><linearGradient id="gr1" x1="0" y1="0" x2="0" y2="1"><stop offset="0" stop-color="#c2c0bb"/><stop offset="1" stop-color="#d6d2ca"/></linearGradient></defs><rect width="274" height="155" fill="url(#gr1)"/><rect width="274" height="52" fill="url(#sky1)"/><path d="M0 52L80 46 215 46 274 42V52z" fill="#c9c6be"/><path d="M22 44c5-4 10-3 14-1 6-5 14-4 20 0 6-3 14-2 22 0v7H22z" fill="#8d8678"/><path d="M213 0h61v22h-61z" fill="#9cb8da"/><path d="M216 19h58v16h-58z" fill="#dde0e3"/><path d="M238 2h26l3 9-3 8h-26l-3-8z" fill="#9a9da1"/><path d="M56 103L190 100 180 132 56 130z" fill="#d9d7d1"/><path d="M165 90L193 76 213 59 216 104 171 132 162 113z" fill="#858380"/><path d="M256 90l18-2v10l-14 14h-8z" fill="#8a8886"/><path d="M166 72L213 45 216 96 170 100z" fill="#2e2e30"/><path d="M78 2L166 0 166 72 87 72 80 37z" fill="#2f63c2"/><path d="M166 0L213 17 213 45 166 72z" fill="#2551a6"/><path d="M80 39h86v7H80z" fill="#2553a8"/><path d="M80 38.5h86M81 46h85M84 56h82M85 64h81" stroke="#1c428c" stroke-width="1.1"/><path d="M98 3v68M117 2v70M139 1v71M160 1v71" stroke="#1d4490" stroke-width="1.1"/><path d="M172 3v63M178 5v59M184 7v55M190 9v50M196 11v46M202 13v42M208 15v39" stroke="#1a3b7c" stroke-width="0.9"/><path d="M166 47L213 34" stroke="#1a3b7c" stroke-width="1.2"/><path d="M106 72h87v18h-87z" fill="#383838"/><path d="M179 68h14v31h-14z" fill="#2a2a2a"/><path d="M92 86h76v22H92z" fill="#9e9e9e"/><path d="M92 86h76v7H92z" fill="#6d6d6d"/><path d="M93 84h13v6H93zM150 86h17v6h-17z" fill="#d8362e"/><path d="M118 85h18v4h-18z" fill="#eee"/><path d="M96 96h12v9H96zM124 96h12v9h-12zM150 96h14v9h-14z" fill="#e9e9e9"/><path d="M97 97l10 7M125 97l10 7M151 97l12 7" stroke="#222" stroke-width="1.8"/><path d="M8 0h4.6v118H8z" fill="#8d9194"/><path d="M7 48h20v48H7z" fill="#a3a6a8"/><path d="M20 48h7v48h-7z" fill="#85888a"/><path d="M2 32l2 0 10 90-2 0z" fill="#3d3d3d"/><path d="M213 23h11v132h-11z" fill="#c9cbce"/><path d="M219 23h2v132h-2z" fill="#8f9397"/><path d="M216 22h40v9h-40z" fill="#d5d8da"/><path d="M254 5h2v106h-2z" fill="#a5a8ab"/><path d="M56 51v80M196 51v80M255 44v68" stroke="#8e9195" stroke-width="0.7"/><path d="M56 51h137" stroke="#a0a3a6" stroke-width="0.6"/><path d="M165 132L213 76" stroke="#3a3a3a" stroke-width="1.5"/><path d="M95 127l18 1M14 120l30-4M60 115l25-3" stroke="#555" stroke-width="1.3"/><rect x="42" y="4.8" width="35" height="6" fill="#fff"/><text x="44" y="10.2" font-size="5.5" fill="#e03030" font-family="Liberation Sans">R  28,0|27,3</text><text x="13" y="16" font-size="8" fill="#fff" stroke="#333" stroke-width="0.9" paint-order="stroke" font-weight="bold" font-family="Liberation Mono" textLength="85">09-04-2018 13:26:35</text><text x="7" y="12" font-size="3.5" fill="#fff" font-family="Liberation Sans">Camera1</text><rect x="167" y="49.6" width="26" height="6" fill="#fff"/><text x="168" y="54.8" font-size="5.2" fill="#333" font-family="Liberation Sans" textLength="24">ec5723 25</text><rect x="167" y="58.8" width="12" height="9.5" fill="none" stroke="#2fd42f" stroke-width="1"/><rect x="10" y="133" width="53.2" height="13.3" fill="#fff"/><text x="11.5" y="143.8" font-size="11" fill="#111" font-family="Liberation Sans" textLength="50.2">ec5723 23</text><rect x="74.2" y="133" width="53.2" height="13.3" fill="#fff"/><text x="75.7" y="143.8" font-size="11" fill="#111" font-family="Liberation Sans" textLength="50.2">ec5723 73</text><rect x="138.6" y="133" width="53.2" height="13.3" fill="#fff"/><text x="140.1" y="143.8" font-size="11" fill="#111" font-family="Liberation Sans" textLength="50.2">ec5723 25</text><rect x="203" y="133" width="53.2" height="13.3" fill="#fff"/><text x="204.5" y="143.8" font-size="11" fill="#111" font-family="Liberation Sans" textLength="50.2">ec5773 73</text><rect x="267.3" y="133" width="6.7" height="13.3" fill="#fff"/><text x="268.8" y="143.8" font-size="11" fill="#111" font-family="Liberation Sans" >e</text><text x="200" y="142" font-size="8" fill="#111" font-family="Liberation Sans">т</text></svg>
<div class="t" style="left:476.06px;top:307.01px;font-size:8.2px;color:#666;font-weight:normal;transform:scaleX(0.976);transform-origin:0 0;">Видео:</div>
<div class="t" style="left:503.24px;top:308.53px;font-size:6.4px;color:#666;font-weight:normal;transform:scaleX(0.950);transform-origin:0 0;">1280x720@7,9</div>
<div class="t" style="left:469.06px;top:315.04px;font-size:8.4px;color:#707070;font-weight:normal;transform:scaleX(0.957);transform-origin:0 0;">Потерь соединения: 1</div>
<div class="t" style="left:489.43px;top:324.59px;font-size:6.8px;color:#444;font-weight:normal;transform:scaleX(0.938);transform-origin:0 0;">Запущено. Ok</div>
<div class="abs" style="left:677.3px;top:104.5px;width:298.20000000000005px;height:241px;background:#fff"></div>
<svg class="abs" style="left:688.8px;top:119px" width="7.5" height="7.5" viewBox="0 0 8 8"><circle cx="4" cy="4" r="3.2" fill="none" stroke="#555" stroke-width="1.1"/><path d="M4 2.2V4h1.6" fill="none" stroke="#555" stroke-width="1"/></svg>
<div class="t" style="left:698.69px;top:118.12px;font-size:9.6px;color:#555;font-weight:bold;transform:scaleX(0.970);transform-origin:0 0;">ВИДЕО</div>
<div class="t" style="left:734.98px;top:118.97px;font-size:8.6px;color:#a5a9ad;font-weight:normal;transform:scaleX(0.919);transform-origin:0 0;">с камеры 1</div>
<div class="abs" style="left:688.3px;top:139px;width:275.20000000000005px;height:1px;background:#eeeeee"></div>
<div class="abs" style="left:922.0px;top:114.4px;width:24.5px;height:16.8px;border-radius:9px;background:#2cb8cc"></div>
<div class="t" style="left:928.33px;top:119.93px;font-size:7.7px;color:#fff;font-weight:normal;transform:scaleX(1.058);transform-origin:0 0;">ON</div>
<div class="abs" style="left:948.5px;top:115px;width:15.2px;height:15.4px;border-radius:8px;border:1px solid #d5d5d5;background:#fff"></div>
<svg class="abs" style="left:952.3px;top:119px" width="7.5" height="7.5" viewBox="0 0 8 8"><path d="M1.5 6.5l5-5" stroke="#666" stroke-width="0.9"/><path d="M4.6 0.8h2.6v2.6zM0.8 4.6v2.6h2.6z" fill="#666"/></svg>
<svg class="abs" style="left:690.2px;top:145.2px" width="273.2" height="154.6" viewBox="0 0 273 155" preserveAspectRatio="none"><rect width="273" height="155" fill="#55595c"/><path d="M160 0h113v65H160z" fill="#d5e2ea"/><path d="M172 8c28-9 70-9 101-4v58h-101z" fill="#e3dfd4"/><path d="M160 54h113v18H160z" fill="#c9bd94"/><path d="M160 72h113v15H160z" fill="#7a7c7e"/><path d="M160 87L273 94V125L160 100z" fill="#7e8183"/><path d="M158 64L273 80V88L158 71z" fill="#b4b6b8"/><path d="M160 42h113M160 53h113" stroke="#8c8f91" stroke-width="0.8"/><path d="M242 0h31v25h-31z" fill="#595d61"/><path d="M182 12.6h28v29.4h-28z" fill="#3b3f43"/><path d="M202 12.6h8v29.4h-8z" fill="#b5b8bb"/><path d="M175 0h7v98h-7z" fill="#5a5d60"/><path d="M217 0L273 56M192 66L242 8.4" stroke="#55585b" stroke-width="4.5"/><path d="M212 53v50M248 55v30" stroke="#777" stroke-width="1.5"/><path d="M0 0h55v24H0z" fill="#30353a"/><path d="M0 24h24v36H0z" fill="#b9c9d2"/><path d="M0 50h24v12H0z" fill="#7d7b75"/><path d="M0 0h5.6v81H0z" fill="#3a3d40"/><path d="M22 13h26v54H22z" fill="#b3ab96"/><path d="M22 40h26v27H22z" fill="#6e6a60"/><path d="M0 62L45 65 90 155H0z" fill="#3f4346"/><path d="M52 98L161 98 273 118 273 155 88 155z" fill="#5f6264"/><path d="M80 108L168 108 240 140 110 140z" fill="#7a7c7e"/><path d="M43 0h117v53l-3 45H52l-9-34z" fill="#c42a22"/><path d="M70 0h88l-1 19c-30 3-60 2-87-2z" fill="#1e2428"/><path d="M46 2h22v20H46z" fill="#d8544c" opacity="0.6"/><path d="M128 0h30v17l-28 2z" fill="#7fb9d2"/><path d="M94 33.6h53v15.4H94z" fill="#1c1e20"/><text x="110" y="45" font-size="6.5" fill="#e0e0e0" font-family="Liberation Sans" font-weight="bold" textLength="33">KAMAZ</text><path d="M88 37.8h20v15.4H88z" fill="#df7a2c"/><path d="M88 45.5h20" stroke="#8a3a1a" stroke-width="0.6"/><path d="M64 64h23v11.6H64zM148 64h10v8h-10z" fill="#e4e6e8"/><path d="M96 60h52v3H96zM96 71h52v3H96z" fill="#cfd0d1"/><path d="M96 63h52v8H96z" fill="#202224"/><rect x="111" y="65" width="21" height="5" fill="#fff"/><rect x="110.6" y="73" width="22.4" height="9.6" fill="#fff" stroke="#2ec04a" stroke-width="1.4"/><path d="M96 84h52v6H96z" fill="#7a1a14"/><path d="M69 85h12v5H69z" fill="#dcdcdc"/><path d="M43 64h9l2 34H47z" fill="#1d1d1d"/><rect x="53" y="54.6" width="108" height="54.4" fill="none" stroke="#c0c0c0" stroke-width="0.7"/><path d="M12.6 54.8L23.8 54.8 89 155 66 155z" fill="#a9abad"/><path d="M20 55L84 155" stroke="#cfd1d3" stroke-width="2.5"/><path d="M35 95h4v30h-4z" fill="#9a9c9e"/><rect x="28" y="1.4" width="22" height="5.6" fill="#fff"/><text x="30" y="6" font-size="4.3" fill="#e03030" font-family="Liberation Sans">P-HENAB</text><text x="4.2" y="13.4" font-size="6" fill="#fff" stroke="#222" stroke-width="0.7" paint-order="stroke" font-weight="bold" font-family="Liberation Mono" textLength="82">04-15-2018 Sun 07:02:06</text><text x="221" y="139" font-size="4.5" fill="#fff" font-family="Liberation Sans">01</text><rect x="6.4" y="139.4" width="39.8" height="9.9" fill="#fff"/><text x="7.4" y="147.6" font-size="8" fill="#111" font-family="Liberation Sans" textLength="37.8">o120ey 152</text><rect x="49" y="139.4" width="39.2" height="9.9" fill="#fff"/><text x="50" y="147.6" font-size="8" fill="#111" font-family="Liberation Sans" textLength="37.2">т120ey 152</text><rect x="92.4" y="139.4" width="39.2" height="9.9" fill="#fff"/><text x="93.4" y="147.6" font-size="8" fill="#111" font-family="Liberation Sans" textLength="37.2">т120ey 158</text><rect x="135" y="139.4" width="31.6" height="9.9" fill="#fff"/><text x="136" y="147.6" font-size="8" fill="#111" font-family="Liberation Sans" textLength="29.6">в99786 7</text><rect x="177.8" y="139.4" width="40.6" height="9.9" fill="#fff"/><text x="178.8" y="147.6" font-size="8" fill="#111" font-family="Liberation Sans" textLength="38.6">o120ey 168</text></svg>
<div class="t" style="left:788.86px;top:307.01px;font-size:8.2px;color:#666;font-weight:normal;transform:scaleX(0.976);transform-origin:0 0;">Видео:</div>
<div class="t" style="left:816.04px;top:308.53px;font-size:6.4px;color:#666;font-weight:normal;transform:scaleX(0.967);transform-origin:0 0;">1920x1078@18,9</div>
<div class="t" style="left:785.16px;top:315.04px;font-size:8.4px;color:#707070;font-weight:normal;transform:scaleX(0.957);transform-origin:0 0;">Потерь соединения: 1</div>
<div class="t" style="left:805.53px;top:324.59px;font-size:6.8px;color:#444;font-weight:normal;transform:scaleX(0.938);transform-origin:0 0;">Запущено. Ok</div>
<div class="abs" style="left:44px;top:401px;width:932px;height:397px;background:#fff"></div>
<svg class="abs" style="left:55.8px;top:414.8px" width="7.6" height="9" viewBox="0 0 8 10"><ellipse cx="4" cy="1.6" rx="4" ry="1.6" fill="#666"/><path d="M0 2.6c0 .9 1.8 1.6 4 1.6s4-.7 4-1.6v1.6c0 .9-1.8 1.6-4 1.6S0 5.1 0 4.2z" fill="#666"/><path d="M0 5.2c0 .9 1.8 1.6 4 1.6s4-.7 4-1.6v1.6c0 .9-1.8 1.6-4 1.6S0 7.7 0 6.8z" fill="#666"/><path d="M0 7.8c0 .9 1.8 1.6 4 1.6s4-.7 4-1.6v.6c0 .9-1.8 1.6-4 1.6S0 9.3 0 8.4z" fill="#666"/></svg>
<div class="t" style="left:66.00px;top:414.69px;font-size:10px;color:#555;font-weight:bold;transform:scaleX(0.937);transform-origin:0 0;">ЖУРНАЛ ВЗВЕШИВАНИЙ</div>
<div class="abs" style="left:56px;top:441px;width:894px;height:1px;background:#eeeeee"></div>
<div class="abs" style="left:731.7px;top:414.9px;width:183.6px;height:19.1px;border-radius:10px;background:#2bbf7a"></div>
<div class="t" style="left:738.31px;top:420.23px;font-size:9px;color:#fff;font-weight:normal;transform:scaleX(0.964);transform-origin:0 0;">Готовность взвешивания</div>
<div class="abs" style="left:840.3px;top:419.8px;width:67.2px;height:9.4px;border-radius:5px;background:#fff"></div>
<div class="t" style="left:843.48px;top:422.02px;font-size:6.3px;color:#6f9a80;font-weight:normal;transform:scaleX(1.033);transform-origin:0 0;">Новое взвешивание</div>
<svg class="abs" style="left:920px;top:418.5px" width="9" height="9" viewBox="0 0 9 9"><path d="M7.6 3.4A3.3 3.3 0 0 0 1.5 2.8M1.4 5.6a3.3 3.3 0 0 0 6.1.6" fill="none" stroke="#999" stroke-width="1"/><path d="M1 0.8v2.8h2.8zM8 8.2V5.4H5.2z" fill="#999"/></svg>
<svg class="abs" style="left:932.5px;top:420.5px" width="9" height="6" viewBox="0 0 9 6"><path d="M0.6 0.8L4.5 4.8 8.4 0.8" fill="none" stroke="#999" stroke-width="1.1"/></svg>
<svg class="abs" style="left:945px;top:418.5px" width="8" height="8" viewBox="0 0 8 8"><path d="M1.2 6.8l5.6-5.6" stroke="#999" stroke-width="0.9"/><path d="M4.4 0.6h3v3zM0.6 4.4v3h3z" fill="#999"/></svg>
<svg class="abs" style="left:957px;top:419px" width="9" height="8" viewBox="0 0 9 8"><rect x="0.5" y="0.5" width="8" height="7" fill="none" stroke="#aaa" stroke-width="1"/><path d="M0.5 2.7h8M0.5 5.1h8M3.2 0.5v7M5.8 0.5v7" stroke="#aaa" stroke-width="0.8"/></svg>
<div class="abs" style="left:55px;top:471px;width:909px;height:45px;background:#f7f9fb"></div>
<div class="abs" style="left:109px;top:516px;width:855px;height:33px;background:#fff4cf"></div>
<div class="abs" style="left:55px;top:516px;width:54px;height:33px;background:#f6f8fb"></div>
<div class="t" style="left:61.42px;top:523.00px;font-size:8.8px;color:#5c5c5c;font-weight:normal;transform:scaleX(0.935);transform-origin:0 0;">07.01.2019</div>
<div class="t" style="left:65.99px;top:533.70px;font-size:8.8px;color:#5c5c5c;font-weight:normal;transform:scaleX(0.930);transform-origin:0 0;">19:43:12</div>
<div class="t" style="left:115.98px;top:523.00px;font-size:8.8px;color:rgba(20,24,0,0.72);font-weight:normal;transform:scaleX(0.916);transform-origin:0 0;">000001</div>
<div class="abs" style="left:187.00px;top:519.5px;width:34.6px;height:14px;background:#4a535c;border-radius:1px"></div>
<div class="t" style="left:190.63px;top:523.00px;font-size:8.8px;color:#fff;font-weight:bold;transform:scaleX(0.921);transform-origin:0 0;">000001</div>
<div class="t" style="left:266.63px;top:523.00px;font-size:8.8px;color:rgba(20,24,0,0.72);font-weight:normal;transform:scaleX(0.923);transform-origin:0 0;">О120ЕУ152</div>
<div class="abs" style="left:264.7px;top:532.9px;width:44.4px;height:11.5px;background:#21ae90;border-radius:1px"></div>
<div class="t" style="left:268.55px;top:534.77px;font-size:8.6px;color:#fff;font-weight:normal;transform:scaleX(0.837);transform-origin:0 0;">Завершить</div>
<div class="t" style="left:378.12px;top:523.00px;font-size:8.8px;color:rgba(20,24,0,0.72);font-weight:normal;transform:scaleX(0.890);transform-origin:0 0;">БРУТТО</div>
<div class="t" style="left:428.35px;top:523.00px;font-size:8.8px;color:rgba(20,24,0,0.72);font-weight:normal;transform:scaleX(0.930);transform-origin:0 0;">46.05</div>
<div class="t" style="left:485.78px;top:523.00px;font-size:8.8px;color:rgba(20,24,0,0.72);font-weight:normal;transform:scaleX(1.016);transform-origin:0 0;">Вручную</div>
<div class="t" style="left:479.75px;top:533.70px;font-size:8.8px;color:rgba(20,24,0,0.72);font-weight:normal;">оператором</div>
<div class="t" style="left:552.40px;top:523.00px;font-size:8.8px;color:rgba(20,24,0,0.72);font-weight:normal;transform:scaleX(0.989);transform-origin:0 0;">Взвешивание</div>
<div class="t" style="left:633.71px;top:523.00px;font-size:8.8px;color:rgba(20,24,0,0.72);font-weight:normal;transform:scaleX(0.930);transform-origin:0 0;">0</div>
<div class="t" style="left:672.35px;top:523.00px;font-size:8.8px;color:rgba(20,24,0,0.72);font-weight:normal;transform:scaleX(0.930);transform-origin:0 0;">46.05</div>
<div class="t" style="left:727.21px;top:523.00px;font-size:8.8px;color:rgba(20,24,0,0.72);font-weight:normal;transform:scaleX(0.930);transform-origin:0 0;">0</div>
<div class="t" style="left:774.54px;top:523.00px;font-size:8.8px;color:rgba(20,24,0,0.72);font-weight:normal;">0</div>
<svg class="abs" style="left:807.9px;top:520.8px" width="37" height="21" viewBox="0 0 37 21"><rect width="37" height="21" fill="#55585b"/><path d="M0 0h37v3H0z" fill="#2e3236"/><path d="M24 0h13v12H24z" fill="#bdb9b0"/><path d="M26 0l11 10M25 10L36 1" stroke="#7a7c7e" stroke-width="1"/><path d="M21 0h3v12h-3z" fill="#3a3d40"/><path d="M0 12L37 9V21H0z" fill="#66696c"/><path d="M0 6l2 0 9 15H6z" fill="#9c9ea0"/><g transform="translate(3 1) scale(1.0)"><path d="M1 1h19v15H2z" fill="#a6221d"/><path d="M2 1h17v3H2z" fill="#2a2020"/><path d="M4 10h4v2H4zM15 10h3v2h-3z" fill="#e6e6e6"/><path d="M9 11h5v2H9z" fill="#9ad29a"/></g><path d="M0 3h4v6H0z" fill="#c7d3da"/><path d="M1.5 18.2h3.5M6 18.2h4M11 18.2h3M15.5 18.2h3M20 18.2h3M24 18.2h3.5" stroke="#e4e4e4" stroke-width="1.1"/></svg>
<svg class="abs" style="left:857px;top:520.8px" width="37" height="21" viewBox="0 0 37 21"><rect width="37" height="21" fill="#c3c1bc"/><path d="M0 0h37v5.5H0z" fill="#4a6aa6"/><path d="M0 5.5h37v1.5H0z" fill="#aab4c0"/><path d="M0 9l37-3" stroke="#9c9e9f" stroke-width="0.8"/><path d="M2.5 5h1.2v13H2.5z" fill="#6a6c6e"/><path d="M24 20l9-13" stroke="#7d7f81" stroke-width="0.8"/><path d="M0 14l37-2" stroke="#b1b0ab" stroke-width="1.5"/><path d="M1.5 18.2h3.5M6 18.2h4M11 18.2h3M15.5 18.2h3M20 18.2h3M24 18.2h3.5" stroke="#e4e4e4" stroke-width="1.1"/></svg>
<div class="abs" style="left:905.1px;top:521.1px;width:19.8px;height:17px;border:1.2px solid #6cb3dc;border-radius:1px"></div>
<svg class="abs" style="left:911.6px;top:526.5px" width="7" height="6" viewBox="0 0 7 6"><path d="M1.6 0.3h3.8v1.6H1.6z" fill="#3d8fd6"/><path d="M0.3 2h6.4v2.6H5.6V3.6H1.4v1H0.3z" fill="#3d8fd6"/><path d="M1.6 4h3.8v1.8H1.6z" fill="#3d8fd6"/></svg>
<div class="abs" style="left:936.1px;top:521.1px;width:19.8px;height:17px;border:1.2px solid #6cb3dc;border-radius:1px"></div>
<svg class="abs" style="left:942.9px;top:526.3px" width="7" height="7" viewBox="0 0 7 7"><circle cx="2.9" cy="2.9" r="2.1" fill="none" stroke="#3d8fd6" stroke-width="1.2"/><path d="M4.5 4.5l2 2" stroke="#3d8fd6" stroke-width="1.4"/></svg>
<div class="abs" style="left:55px;top:516px;width:909px;height:1px;background:#e6eaee"></div>
<div class="abs" style="left:109px;top:549px;width:855px;height:31.5px;background:#c7e77a"></div>
<div class="abs" style="left:55px;top:549px;width:54px;height:31.5px;background:#f6f8fb"></div>
<div class="t" style="left:61.13px;top:556.00px;font-size:8.8px;color:#5c5c5c;font-weight:normal;transform:scaleX(0.941);transform-origin:0 0;">19.12.2018</div>
<div class="t" style="left:66.19px;top:566.70px;font-size:8.8px;color:#5c5c5c;font-weight:normal;transform:scaleX(0.922);transform-origin:0 0;">20:19:51</div>
<div class="t" style="left:115.98px;top:556.00px;font-size:8.8px;color:rgba(20,24,0,0.72);font-weight:normal;transform:scaleX(0.915);transform-origin:0 0;">000228</div>
<div class="abs" style="left:187.00px;top:552.5px;width:34.6px;height:14px;background:#4a535c;border-radius:1px"></div>
<div class="t" style="left:190.63px;top:556.00px;font-size:8.8px;color:#fff;font-weight:bold;transform:scaleX(0.922);transform-origin:0 0;">000238</div>
<div class="t" style="left:266.63px;top:556.00px;font-size:8.8px;color:rgba(20,24,0,0.72);font-weight:normal;transform:scaleX(0.923);transform-origin:0 0;">О120ЕУ152</div>
<div class="t" style="left:378.12px;top:556.00px;font-size:8.8px;color:rgba(20,24,0,0.72);font-weight:normal;transform:scaleX(0.890);transform-origin:0 0;">БРУТТО</div>
<div class="t" style="left:428.23px;top:556.00px;font-size:8.8px;color:rgba(20,24,0,0.72);font-weight:normal;transform:scaleX(0.930);transform-origin:0 0;">37.24</div>
<div class="t" style="left:476.00px;top:556.00px;font-size:8.8px;color:rgba(20,24,0,0.72);font-weight:normal;transform:scaleX(0.954);transform-origin:0 0;">Автофиксация</div>
<div class="t" style="left:478.94px;top:566.70px;font-size:8.8px;color:rgba(20,24,0,0.72);font-weight:normal;transform:scaleX(0.901);transform-origin:0 0;">после съезда</div>
<div class="t" style="left:552.40px;top:556.00px;font-size:8.8px;color:rgba(20,24,0,0.72);font-weight:normal;transform:scaleX(0.989);transform-origin:0 0;">Взвешивание</div>
<div class="t" style="left:625.81px;top:556.00px;font-size:8.8px;color:rgba(20,24,0,0.72);font-weight:normal;transform:scaleX(0.930);transform-origin:0 0;">35.37</div>
<div class="t" style="left:672.23px;top:556.00px;font-size:8.8px;color:rgba(20,24,0,0.72);font-weight:normal;transform:scaleX(0.930);transform-origin:0 0;">37.24</div>
<div class="t" style="left:721.44px;top:556.00px;font-size:8.8px;color:rgba(20,24,0,0.72);font-weight:normal;transform:scaleX(0.930);transform-origin:0 0;">1.87</div>
<div class="t" style="left:774.54px;top:556.00px;font-size:8.8px;color:rgba(20,24,0,0.72);font-weight:normal;">0</div>
<svg class="abs" style="left:807.9px;top:553.8px" width="37" height="21" viewBox="0 0 37 21"><rect width="37" height="21" fill="#55585b"/><path d="M0 0h37v3H0z" fill="#2e3236"/><path d="M24 0h13v12H24z" fill="#bdb9b0"/><path d="M26 0l11 10M25 10L36 1" stroke="#7a7c7e" stroke-width="1"/><path d="M21 0h3v12h-3z" fill="#3a3d40"/><path d="M0 12L37 9V21H0z" fill="#66696c"/><path d="M0 6l2 0 9 15H6z" fill="#9c9ea0"/><g transform="translate(3 1) scale(1.0)"><path d="M1 1h19v15H2z" fill="#a6221d"/><path d="M2 1h17v3H2z" fill="#2a2020"/><path d="M4 10h4v2H4zM15 10h3v2h-3z" fill="#e6e6e6"/><path d="M9 11h5v2H9z" fill="#9ad29a"/></g><path d="M0 3h4v6H0z" fill="#c7d3da"/><path d="M1.5 18.2h3.5M6 18.2h4M11 18.2h3M15.5 18.2h3M20 18.2h3M24 18.2h3.5" stroke="#e4e4e4" stroke-width="1.1"/></svg>
<svg class="abs" style="left:857px;top:553.8px" width="37" height="21" viewBox="0 0 37 21"><rect width="37" height="21" fill="#c3c1bc"/><path d="M0 0h37v5.5H0z" fill="#4a6aa6"/><path d="M0 5.5h37v1.5H0z" fill="#aab4c0"/><path d="M0 9l37-3" stroke="#9c9e9f" stroke-width="0.8"/><path d="M2.5 5h1.2v13H2.5z" fill="#6a6c6e"/><path d="M24 20l9-13" stroke="#7d7f81" stroke-width="0.8"/><path d="M0 14l37-2" stroke="#b1b0ab" stroke-width="1.5"/><path d="M21 5h9v6h-9z" fill="#8a7458"/><path d="M21 11h9v1.5h-9z" fill="#3a3a3a"/><path d="M1.5 18.2h3.5M6 18.2h4M11 18.2h3M15.5 18.2h3M20 18.2h3M24 18.2h3.5" stroke="#e4e4e4" stroke-width="1.1"/></svg>
<div class="abs" style="left:905.1px;top:554.1px;width:19.8px;height:17px;border:1.2px solid #6cb3dc;border-radius:1px"></div>
<svg class="abs" style="left:911.6px;top:559.5px" width="7" height="6" viewBox="0 0 7 6"><path d="M1.6 0.3h3.8v1.6H1.6z" fill="#3d8fd6"/><path d="M0.3 2h6.4v2.6H5.6V3.6H1.4v1H0.3z" fill="#3d8fd6"/><path d="M1.6 4h3.8v1.8H1.6z" fill="#3d8fd6"/></svg>
<div class="abs" style="left:936.1px;top:554.1px;width:19.8px;height:17px;border:1.2px solid #6cb3dc;border-radius:1px"></div>
<svg class="abs" style="left:942.9px;top:559.3px" width="7" height="7" viewBox="0 0 7 7"><circle cx="2.9" cy="2.9" r="2.1" fill="none" stroke="#3d8fd6" stroke-width="1.2"/><path d="M4.5 4.5l2 2" stroke="#3d8fd6" stroke-width="1.4"/></svg>
<div class="abs" style="left:55px;top:549px;width:909px;height:1px;background:rgba(240,240,236,0.9)"></div>
<div class="abs" style="left:109px;top:580.5px;width:855px;height:31.5px;background:#e8fbb9"></div>
<div class="abs" style="left:55px;top:580.5px;width:54px;height:31.5px;background:#f6f8fb"></div>
<div class="t" style="left:61.13px;top:587.50px;font-size:8.8px;color:#5c5c5c;font-weight:normal;transform:scaleX(0.941);transform-origin:0 0;">19.12.2018</div>
<div class="t" style="left:65.99px;top:598.20px;font-size:8.8px;color:#5c5c5c;font-weight:normal;transform:scaleX(0.927);transform-origin:0 0;">16:45:13</div>
<div class="t" style="left:115.98px;top:587.50px;font-size:8.8px;color:rgba(20,24,0,0.72);font-weight:normal;transform:scaleX(0.917);transform-origin:0 0;">000227</div>
<div class="abs" style="left:187.00px;top:584.0px;width:34.6px;height:14px;background:#4a535c;border-radius:1px"></div>
<div class="t" style="left:190.63px;top:587.50px;font-size:8.8px;color:#fff;font-weight:bold;transform:scaleX(0.922);transform-origin:0 0;">000238</div>
<div class="t" style="left:266.63px;top:587.50px;font-size:8.8px;color:rgba(20,24,0,0.72);font-weight:normal;transform:scaleX(0.923);transform-origin:0 0;">О120ЕУ152</div>
<div class="t" style="left:383.34px;top:587.50px;font-size:8.8px;color:rgba(20,24,0,0.72);font-weight:normal;transform:scaleX(0.913);transform-origin:0 0;">ТАРА</div>
<div class="t" style="left:428.31px;top:587.50px;font-size:8.8px;color:rgba(20,24,0,0.72);font-weight:normal;transform:scaleX(0.930);transform-origin:0 0;">35.37</div>
<div class="t" style="left:485.78px;top:587.50px;font-size:8.8px;color:rgba(20,24,0,0.72);font-weight:normal;transform:scaleX(1.016);transform-origin:0 0;">Вручную</div>
<div class="t" style="left:479.75px;top:598.20px;font-size:8.8px;color:rgba(20,24,0,0.72);font-weight:normal;">оператором</div>
<div class="t" style="left:552.40px;top:587.50px;font-size:8.8px;color:rgba(20,24,0,0.72);font-weight:normal;transform:scaleX(0.989);transform-origin:0 0;">Взвешивание</div>
<div class="t" style="left:625.81px;top:587.50px;font-size:8.8px;color:rgba(20,24,0,0.72);font-weight:normal;transform:scaleX(0.930);transform-origin:0 0;">35.37</div>
<div class="t" style="left:672.23px;top:587.50px;font-size:8.8px;color:rgba(20,24,0,0.72);font-weight:normal;transform:scaleX(0.930);transform-origin:0 0;">37.24</div>
<div class="t" style="left:721.44px;top:587.50px;font-size:8.8px;color:rgba(20,24,0,0.72);font-weight:normal;transform:scaleX(0.930);transform-origin:0 0;">1.87</div>
<div class="t" style="left:774.54px;top:587.50px;font-size:8.8px;color:rgba(20,24,0,0.72);font-weight:normal;">0</div>
<svg class="abs" style="left:807.9px;top:585.3px" width="37" height="21" viewBox="0 0 37 21"><rect width="37" height="21" fill="#55585b"/><path d="M0 0h37v3H0z" fill="#2e3236"/><path d="M24 0h13v12H24z" fill="#bdb9b0"/><path d="M26 0l11 10M25 10L36 1" stroke="#7a7c7e" stroke-width="1"/><path d="M21 0h3v12h-3z" fill="#3a3d40"/><path d="M0 12L37 9V21H0z" fill="#66696c"/><path d="M0 6l2 0 9 15H6z" fill="#9c9ea0"/><g transform="translate(3 1) scale(1.0)"><path d="M1 1h19v15H2z" fill="#a6221d"/><path d="M2 1h17v3H2z" fill="#2a2020"/><path d="M4 10h4v2H4zM15 10h3v2h-3z" fill="#e6e6e6"/><path d="M9 11h5v2H9z" fill="#9ad29a"/></g><path d="M0 3h4v6H0z" fill="#c7d3da"/><path d="M1.5 18.2h3.5M6 18.2h4M11 18.2h3M15.5 18.2h3M20 18.2h3M24 18.2h3.5" stroke="#e4e4e4" stroke-width="1.1"/></svg>
<svg class="abs" style="left:857px;top:585.3px" width="37" height="21" viewBox="0 0 37 21"><rect width="37" height="21" fill="#c3c1bc"/><path d="M0 0h37v5.5H0z" fill="#4a6aa6"/><path d="M0 5.5h37v1.5H0z" fill="#aab4c0"/><path d="M0 9l37-3" stroke="#9c9e9f" stroke-width="0.8"/><path d="M2.5 5h1.2v13H2.5z" fill="#6a6c6e"/><path d="M24 20l9-13" stroke="#7d7f81" stroke-width="0.8"/><path d="M0 14l37-2" stroke="#b1b0ab" stroke-width="1.5"/><path d="M19 4h11v8H19z" fill="#b8552e"/><path d="M20 12h9v2h-9z" fill="#3a3a3a"/><path d="M1.5 18.2h3.5M6 18.2h4M11 18.2h3M15.5 18.2h3M20 18.2h3M24 18.2h3.5" stroke="#e4e4e4" stroke-width="1.1"/></svg>
<div class="abs" style="left:905.1px;top:585.6px;width:19.8px;height:17px;border:1.2px solid #6cb3dc;border-radius:1px"></div>
<svg class="abs" style="left:911.6px;top:591.0px" width="7" height="6" viewBox="0 0 7 6"><path d="M1.6 0.3h3.8v1.6H1.6z" fill="#3d8fd6"/><path d="M0.3 2h6.4v2.6H5.6V3.6H1.4v1H0.3z" fill="#3d8fd6"/><path d="M1.6 4h3.8v1.8H1.6z" fill="#3d8fd6"/></svg>
<div class="abs" style="left:936.1px;top:585.6px;width:19.8px;height:17px;border:1.2px solid #6cb3dc;border-radius:1px"></div>
<svg class="abs" style="left:942.9px;top:590.8px" width="7" height="7" viewBox="0 0 7 7"><circle cx="2.9" cy="2.9" r="2.1" fill="none" stroke="#3d8fd6" stroke-width="1.2"/><path d="M4.5 4.5l2 2" stroke="#3d8fd6" stroke-width="1.4"/></svg>
<div class="abs" style="left:55px;top:580.5px;width:909px;height:1px;background:rgba(240,240,236,0.9)"></div>
<div class="abs" style="left:109px;top:612px;width:855px;height:33px;background:#fff4cf"></div>
<div class="abs" style="left:55px;top:612px;width:54px;height:33px;background:#f6f8fb"></div>
<div class="t" style="left:61.13px;top:619.00px;font-size:8.8px;color:#5c5c5c;font-weight:normal;transform:scaleX(0.941);transform-origin:0 0;">10.12.2018</div>
<div class="t" style="left:65.96px;top:629.70px;font-size:8.8px;color:#5c5c5c;font-weight:normal;transform:scaleX(0.966);transform-origin:0 0;">11:53:11</div>
<div class="t" style="left:115.98px;top:619.00px;font-size:8.8px;color:rgba(20,24,0,0.72);font-weight:normal;transform:scaleX(0.917);transform-origin:0 0;">000222</div>
<div class="t" style="left:266.63px;top:619.00px;font-size:8.8px;color:rgba(20,24,0,0.72);font-weight:normal;transform:scaleX(0.923);transform-origin:0 0;">О120ЕУ152</div>
<div class="abs" style="left:264.7px;top:628.9px;width:44.4px;height:11.5px;background:#21ae90;border-radius:1px"></div>
<div class="t" style="left:268.55px;top:630.77px;font-size:8.6px;color:#fff;font-weight:normal;transform:scaleX(0.837);transform-origin:0 0;">Завершить</div>
<div class="t" style="left:378.12px;top:619.00px;font-size:8.8px;color:rgba(20,24,0,0.72);font-weight:normal;transform:scaleX(0.890);transform-origin:0 0;">БРУТТО</div>
<div class="t" style="left:433.81px;top:619.00px;font-size:8.8px;color:rgba(20,24,0,0.72);font-weight:normal;transform:scaleX(0.930);transform-origin:0 0;">15</div>
<div class="t" style="left:476.00px;top:619.00px;font-size:8.8px;color:rgba(20,24,0,0.72);font-weight:normal;transform:scaleX(0.954);transform-origin:0 0;">Автофиксация</div>
<div class="t" style="left:478.94px;top:629.70px;font-size:8.8px;color:rgba(20,24,0,0.72);font-weight:normal;transform:scaleX(0.901);transform-origin:0 0;">после съезда</div>
<div class="t" style="left:552.40px;top:619.00px;font-size:8.8px;color:rgba(20,24,0,0.72);font-weight:normal;transform:scaleX(0.989);transform-origin:0 0;">Взвешивание</div>
<div class="t" style="left:633.71px;top:619.00px;font-size:8.8px;color:rgba(20,24,0,0.72);font-weight:normal;transform:scaleX(0.930);transform-origin:0 0;">0</div>
<div class="t" style="left:677.81px;top:619.00px;font-size:8.8px;color:rgba(20,24,0,0.72);font-weight:normal;transform:scaleX(0.930);transform-origin:0 0;">15</div>
<div class="t" style="left:727.21px;top:619.00px;font-size:8.8px;color:rgba(20,24,0,0.72);font-weight:normal;transform:scaleX(0.930);transform-origin:0 0;">0</div>
<div class="t" style="left:774.54px;top:619.00px;font-size:8.8px;color:rgba(20,24,0,0.72);font-weight:normal;">0</div>
<svg class="abs" style="left:807.9px;top:616.8px" width="37" height="21" viewBox="0 0 37 21"><rect width="37" height="21" fill="#4f5255"/><path d="M0 0h37v2.5H0z" fill="#2a2e32"/><path d="M9 1h12v8H9z" fill="#c9dae6"/><path d="M21 0h16v10H21z" fill="#cfcac0"/><path d="M22 0l15 10M23 10L36 0" stroke="#4d5052" stroke-width="1.2"/><path d="M0 2h9v8H0z" fill="#3d4145"/><path d="M0 10L37 9V21H0z" fill="#616467"/><path d="M3 10l2 0 9 11H10z" fill="#8f9193"/><path d="M14 12l23 3M16 15l21 4" stroke="#7a7c7e" stroke-width="0.8"/><path d="M1.5 18.2h3.5M6 18.2h4M11 18.2h3M15.5 18.2h3M20 18.2h3M24 18.2h3.5" stroke="#e4e4e4" stroke-width="1.1"/></svg>
<svg class="abs" style="left:857px;top:616.8px" width="37" height="21" viewBox="0 0 37 21"><rect width="37" height="21" fill="#b8b9ba"/><path d="M0 0h37v3H0z" fill="#3f5a8c"/><path d="M0 3h26v6L0 12z" fill="#9fa0a0"/><path d="M0 12l26-3 3 3L3 21H0z" fill="#1c1d1f"/><path d="M26 3h11v18H23l6-9z" fill="#c8c6c0"/><path d="M0 12l26-3" stroke="#d8d8d8" stroke-width="0.8"/><path d="M1.5 18.2h3.5M6 18.2h4M11 18.2h3M15.5 18.2h3M20 18.2h3M24 18.2h3.5" stroke="#e4e4e4" stroke-width="1.1"/></svg>
<div class="abs" style="left:905.1px;top:617.1px;width:19.8px;height:17px;border:1.2px solid #6cb3dc;border-radius:1px"></div>
<svg class="abs" style="left:911.6px;top:622.5px" width="7" height="6" viewBox="0 0 7 6"><path d="M1.6 0.3h3.8v1.6H1.6z" fill="#3d8fd6"/><path d="M0.3 2h6.4v2.6H5.6V3.6H1.4v1H0.3z" fill="#3d8fd6"/><path d="M1.6 4h3.8v1.8H1.6z" fill="#3d8fd6"/></svg>
<div class="abs" style="left:936.1px;top:617.1px;width:19.8px;height:17px;border:1.2px solid #6cb3dc;border-radius:1px"></div>
<svg class="abs" style="left:942.9px;top:622.3px" width="7" height="7" viewBox="0 0 7 7"><circle cx="2.9" cy="2.9" r="2.1" fill="none" stroke="#3d8fd6" stroke-width="1.2"/><path d="M4.5 4.5l2 2" stroke="#3d8fd6" stroke-width="1.4"/></svg>
<div class="abs" style="left:55px;top:612px;width:909px;height:1px;background:rgba(240,240,236,0.9)"></div>
<div class="abs" style="left:109px;top:645px;width:855px;height:33.60000000000002px;background:#fff4cf"></div>
<div class="abs" style="left:55px;top:645px;width:54px;height:33.60000000000002px;background:#f6f8fb"></div>
<div class="t" style="left:61.42px;top:652.00px;font-size:8.8px;color:#5c5c5c;font-weight:normal;transform:scaleX(0.934);transform-origin:0 0;">07.12.2018</div>
<div class="t" style="left:66.28px;top:662.70px;font-size:8.8px;color:#5c5c5c;font-weight:normal;transform:scaleX(0.919);transform-origin:0 0;">01:57:13</div>
<div class="t" style="left:115.98px;top:652.00px;font-size:8.8px;color:rgba(20,24,0,0.72);font-weight:normal;transform:scaleX(0.916);transform-origin:0 0;">000221</div>
<div class="t" style="left:266.63px;top:652.00px;font-size:8.8px;color:rgba(20,24,0,0.72);font-weight:normal;transform:scaleX(0.923);transform-origin:0 0;">О120ЕУ152</div>
<div class="abs" style="left:264.7px;top:661.9px;width:44.4px;height:11.5px;background:#21ae90;border-radius:1px"></div>
<div class="t" style="left:268.55px;top:663.77px;font-size:8.6px;color:#fff;font-weight:normal;transform:scaleX(0.837);transform-origin:0 0;">Завершить</div>
<div class="t" style="left:378.12px;top:652.00px;font-size:8.8px;color:rgba(20,24,0,0.72);font-weight:normal;transform:scaleX(0.890);transform-origin:0 0;">БРУТТО</div>
<div class="t" style="left:430.58px;top:652.00px;font-size:8.8px;color:rgba(20,24,0,0.72);font-weight:normal;transform:scaleX(0.930);transform-origin:0 0;">31.2</div>
<div class="t" style="left:476.00px;top:652.00px;font-size:8.8px;color:rgba(20,24,0,0.72);font-weight:normal;transform:scaleX(0.954);transform-origin:0 0;">Автофиксация</div>
<div class="t" style="left:478.94px;top:662.70px;font-size:8.8px;color:rgba(20,24,0,0.72);font-weight:normal;transform:scaleX(0.901);transform-origin:0 0;">после съезда</div>
<div class="t" style="left:552.40px;top:652.00px;font-size:8.8px;color:rgba(20,24,0,0.72);font-weight:normal;transform:scaleX(0.989);transform-origin:0 0;">Взвешивание</div>
<div class="t" style="left:633.71px;top:652.00px;font-size:8.8px;color:rgba(20,24,0,0.72);font-weight:normal;transform:scaleX(0.930);transform-origin:0 0;">0</div>
<div class="t" style="left:674.58px;top:652.00px;font-size:8.8px;color:rgba(20,24,0,0.72);font-weight:normal;transform:scaleX(0.930);transform-origin:0 0;">31.2</div>
<div class="t" style="left:727.21px;top:652.00px;font-size:8.8px;color:rgba(20,24,0,0.72);font-weight:normal;transform:scaleX(0.930);transform-origin:0 0;">0</div>
<div class="t" style="left:774.54px;top:652.00px;font-size:8.8px;color:rgba(20,24,0,0.72);font-weight:normal;">0</div>
<svg class="abs" style="left:807.9px;top:649.8px" width="37" height="21" viewBox="0 0 37 21"><rect width="37" height="21" fill="#55585b"/><path d="M0 0h37v3H0z" fill="#2e3236"/><path d="M24 0h13v12H24z" fill="#bdb9b0"/><path d="M26 0l11 10M25 10L36 1" stroke="#7a7c7e" stroke-width="1"/><path d="M21 0h3v12h-3z" fill="#3a3d40"/><path d="M0 12L37 9V21H0z" fill="#66696c"/><path d="M0 6l2 0 9 15H6z" fill="#9c9ea0"/><g transform="translate(3 1) scale(1.0)"><path d="M1 1h19v15H2z" fill="#a6221d"/><path d="M2 1h17v3H2z" fill="#2a2020"/><path d="M4 10h4v2H4zM15 10h3v2h-3z" fill="#e6e6e6"/><path d="M9 11h5v2H9z" fill="#9ad29a"/></g><path d="M0 3h4v6H0z" fill="#c7d3da"/><path d="M1.5 18.2h3.5M6 18.2h4M11 18.2h3M15.5 18.2h3M20 18.2h3M24 18.2h3.5" stroke="#e4e4e4" stroke-width="1.1"/></svg>
<svg class="abs" style="left:857px;top:649.8px" width="37" height="21" viewBox="0 0 37 21"><rect width="37" height="21" fill="#c3c1bc"/><path d="M0 0h37v5.5H0z" fill="#4a6aa6"/><path d="M0 5.5h37v1.5H0z" fill="#aab4c0"/><path d="M0 9l37-3" stroke="#9c9e9f" stroke-width="0.8"/><path d="M2.5 5h1.2v13H2.5z" fill="#6a6c6e"/><path d="M24 20l9-13" stroke="#7d7f81" stroke-width="0.8"/><path d="M0 14l37-2" stroke="#b1b0ab" stroke-width="1.5"/><path d="M21 5h9v6h-9z" fill="#8a7458"/><path d="M21 11h9v1.5h-9z" fill="#3a3a3a"/><path d="M1.5 18.2h3.5M6 18.2h4M11 18.2h3M15.5 18.2h3M20 18.2h3M24 18.2h3.5" stroke="#e4e4e4" stroke-width="1.1"/></svg>
<div class="abs" style="left:905.1px;top:650.1px;width:19.8px;height:17px;border:1.2px solid #6cb3dc;border-radius:1px"></div>
<svg class="abs" style="left:911.6px;top:655.5px" width="7" height="6" viewBox="0 0 7 6"><path d="M1.6 0.3h3.8v1.6H1.6z" fill="#3d8fd6"/><path d="M0.3 2h6.4v2.6H5.6V3.6H1.4v1H0.3z" fill="#3d8fd6"/><path d="M1.6 4h3.8v1.8H1.6z" fill="#3d8fd6"/></svg>
<div class="abs" style="left:936.1px;top:650.1px;width:19.8px;height:17px;border:1.2px solid #6cb3dc;border-radius:1px"></div>
<svg class="abs" style="left:942.9px;top:655.3px" width="7" height="7" viewBox="0 0 7 7"><circle cx="2.9" cy="2.9" r="2.1" fill="none" stroke="#3d8fd6" stroke-width="1.2"/><path d="M4.5 4.5l2 2" stroke="#3d8fd6" stroke-width="1.4"/></svg>
<div class="abs" style="left:55px;top:645px;width:909px;height:1px;background:rgba(240,240,236,0.9)"></div>
<div class="abs" style="left:109px;top:678.6px;width:855px;height:30.699999999999932px;background:#c7e77a"></div>
<div class="abs" style="left:55px;top:678.6px;width:54px;height:30.699999999999932px;background:#f6f8fb"></div>
<div class="t" style="left:61.42px;top:685.60px;font-size:8.8px;color:#5c5c5c;font-weight:normal;transform:scaleX(0.934);transform-origin:0 0;">04.12.2018</div>
<div class="t" style="left:65.97px;top:696.30px;font-size:8.8px;color:#5c5c5c;font-weight:normal;transform:scaleX(0.947);transform-origin:0 0;">15:11:41</div>
<div class="t" style="left:115.98px;top:685.60px;font-size:8.8px;color:rgba(20,24,0,0.72);font-weight:normal;transform:scaleX(0.913);transform-origin:0 0;">000220</div>
<div class="abs" style="left:187.00px;top:682.1px;width:34.6px;height:14px;background:#4a535c;border-radius:1px"></div>
<div class="t" style="left:190.63px;top:685.60px;font-size:8.8px;color:#fff;font-weight:bold;transform:scaleX(0.921);transform-origin:0 0;">000235</div>
<div class="t" style="left:266.63px;top:685.60px;font-size:8.8px;color:rgba(20,24,0,0.72);font-weight:normal;transform:scaleX(0.923);transform-origin:0 0;">О120ЕУ152</div>
<div class="t" style="left:378.12px;top:685.60px;font-size:8.8px;color:rgba(20,24,0,0.72);font-weight:normal;transform:scaleX(0.890);transform-origin:0 0;">БРУТТО</div>
<div class="t" style="left:428.27px;top:685.60px;font-size:8.8px;color:rgba(20,24,0,0.72);font-weight:normal;transform:scaleX(0.930);transform-origin:0 0;">35.78</div>
<div class="t" style="left:485.78px;top:685.60px;font-size:8.8px;color:rgba(20,24,0,0.72);font-weight:normal;transform:scaleX(1.016);transform-origin:0 0;">Вручную</div>
<div class="t" style="left:479.75px;top:696.30px;font-size:8.8px;color:rgba(20,24,0,0.72);font-weight:normal;">оператором</div>
<div class="t" style="left:552.40px;top:685.60px;font-size:8.8px;color:rgba(20,24,0,0.72);font-weight:normal;transform:scaleX(0.989);transform-origin:0 0;">Взвешивание</div>
<div class="t" style="left:625.77px;top:685.60px;font-size:8.8px;color:rgba(20,24,0,0.72);font-weight:normal;transform:scaleX(0.930);transform-origin:0 0;">31.88</div>
<div class="t" style="left:672.27px;top:685.60px;font-size:8.8px;color:rgba(20,24,0,0.72);font-weight:normal;transform:scaleX(0.930);transform-origin:0 0;">35.78</div>
<div class="t" style="left:723.83px;top:685.60px;font-size:8.8px;color:rgba(20,24,0,0.72);font-weight:normal;transform:scaleX(0.930);transform-origin:0 0;">3.9</div>
<div class="t" style="left:774.54px;top:685.60px;font-size:8.8px;color:rgba(20,24,0,0.72);font-weight:normal;">0</div>
<svg class="abs" style="left:807.9px;top:683.4px" width="37" height="21" viewBox="0 0 37 21"><rect width="37" height="21" fill="#55585b"/><path d="M0 0h37v3H0z" fill="#2e3236"/><path d="M24 0h13v12H24z" fill="#bdb9b0"/><path d="M26 0l11 10M25 10L36 1" stroke="#7a7c7e" stroke-width="1"/><path d="M21 0h3v12h-3z" fill="#3a3d40"/><path d="M0 12L37 9V21H0z" fill="#66696c"/><path d="M0 6l2 0 9 15H6z" fill="#9c9ea0"/><g transform="translate(3 1) scale(1.0)"><path d="M1 1h19v15H2z" fill="#a6221d"/><path d="M2 1h17v3H2z" fill="#2a2020"/><path d="M4 10h4v2H4zM15 10h3v2h-3z" fill="#e6e6e6"/><path d="M9 11h5v2H9z" fill="#9ad29a"/></g><path d="M0 3h4v6H0z" fill="#c7d3da"/><path d="M1.5 18.2h3.5M6 18.2h4M11 18.2h3M15.5 18.2h3M20 18.2h3M24 18.2h3.5" stroke="#e4e4e4" stroke-width="1.1"/></svg>
<svg class="abs" style="left:857px;top:683.4px" width="37" height="21" viewBox="0 0 37 21"><rect width="37" height="21" fill="#c3c1bc"/><path d="M0 0h37v5.5H0z" fill="#4a6aa6"/><path d="M0 5.5h37v1.5H0z" fill="#aab4c0"/><path d="M0 9l37-3" stroke="#9c9e9f" stroke-width="0.8"/><path d="M2.5 5h1.2v13H2.5z" fill="#6a6c6e"/><path d="M24 20l9-13" stroke="#7d7f81" stroke-width="0.8"/><path d="M0 14l37-2" stroke="#b1b0ab" stroke-width="1.5"/><path d="M1.5 18.2h3.5M6 18.2h4M11 18.2h3M15.5 18.2h3M20 18.2h3M24 18.2h3.5" stroke="#e4e4e4" stroke-width="1.1"/></svg>
<div class="abs" style="left:905.1px;top:683.7px;width:19.8px;height:17px;border:1.2px solid #6cb3dc;border-radius:1px"></div>
<svg class="abs" style="left:911.6px;top:689.1px" width="7" height="6" viewBox="0 0 7 6"><path d="M1.6 0.3h3.8v1.6H1.6z" fill="#3d8fd6"/><path d="M0.3 2h6.4v2.6H5.6V3.6H1.4v1H0.3z" fill="#3d8fd6"/><path d="M1.6 4h3.8v1.8H1.6z" fill="#3d8fd6"/></svg>
<div class="abs" style="left:936.1px;top:683.7px;width:19.8px;height:17px;border:1.2px solid #6cb3dc;border-radius:1px"></div>
<svg class="abs" style="left:942.9px;top:688.9px" width="7" height="7" viewBox="0 0 7 7"><circle cx="2.9" cy="2.9" r="2.1" fill="none" stroke="#3d8fd6" stroke-width="1.2"/><path d="M4.5 4.5l2 2" stroke="#3d8fd6" stroke-width="1.4"/></svg>
<div class="abs" style="left:55px;top:678.6px;width:909px;height:1px;background:rgba(240,240,236,0.9)"></div>
<div class="abs" style="left:109px;top:709.3px;width:855px;height:32.10000000000002px;background:#e8fbb9"></div>
<div class="abs" style="left:55px;top:709.3px;width:54px;height:32.10000000000002px;background:#f6f8fb"></div>
<div class="t" style="left:61.42px;top:716.30px;font-size:8.8px;color:#5c5c5c;font-weight:normal;transform:scaleX(0.934);transform-origin:0 0;">04.12.2018</div>
<div class="t" style="left:65.99px;top:727.00px;font-size:8.8px;color:#5c5c5c;font-weight:normal;transform:scaleX(0.927);transform-origin:0 0;">14:35:23</div>
<div class="t" style="left:115.98px;top:716.30px;font-size:8.8px;color:rgba(20,24,0,0.72);font-weight:normal;transform:scaleX(0.916);transform-origin:0 0;">000219</div>
<div class="abs" style="left:187.00px;top:712.8px;width:34.6px;height:14px;background:#4a535c;border-radius:1px"></div>
<div class="t" style="left:190.63px;top:716.30px;font-size:8.8px;color:#fff;font-weight:bold;transform:scaleX(0.921);transform-origin:0 0;">000235</div>
<div class="t" style="left:266.63px;top:716.30px;font-size:8.8px;color:rgba(20,24,0,0.72);font-weight:normal;transform:scaleX(0.923);transform-origin:0 0;">О120ЕУ152</div>
<div class="t" style="left:383.34px;top:716.30px;font-size:8.8px;color:rgba(20,24,0,0.72);font-weight:normal;transform:scaleX(0.913);transform-origin:0 0;">ТАРА</div>
<div class="t" style="left:428.27px;top:716.30px;font-size:8.8px;color:rgba(20,24,0,0.72);font-weight:normal;transform:scaleX(0.930);transform-origin:0 0;">31.88</div>
<div class="t" style="left:485.78px;top:716.30px;font-size:8.8px;color:rgba(20,24,0,0.72);font-weight:normal;transform:scaleX(1.016);transform-origin:0 0;">Вручную</div>
<div class="t" style="left:479.75px;top:727.00px;font-size:8.8px;color:rgba(20,24,0,0.72);font-weight:normal;">оператором</div>
<div class="t" style="left:552.40px;top:716.30px;font-size:8.8px;color:rgba(20,24,0,0.72);font-weight:normal;transform:scaleX(0.989);transform-origin:0 0;">Взвешивание</div>
<div class="t" style="left:625.77px;top:716.30px;font-size:8.8px;color:rgba(20,24,0,0.72);font-weight:normal;transform:scaleX(0.930);transform-origin:0 0;">31.88</div>
<div class="t" style="left:672.27px;top:716.30px;font-size:8.8px;color:rgba(20,24,0,0.72);font-weight:normal;transform:scaleX(0.930);transform-origin:0 0;">35.78</div>
<div class="t" style="left:723.83px;top:716.30px;font-size:8.8px;color:rgba(20,24,0,0.72);font-weight:normal;transform:scaleX(0.930);transform-origin:0 0;">3.9</div>
<div class="t" style="left:774.54px;top:716.30px;font-size:8.8px;color:rgba(20,24,0,0.72);font-weight:normal;">0</div>
<svg class="abs" style="left:807.9px;top:714.0999999999999px" width="37" height="21" viewBox="0 0 37 21"><rect width="37" height="21" fill="#55585b"/><path d="M0 0h37v3H0z" fill="#2e3236"/><path d="M24 0h13v12H24z" fill="#bdb9b0"/><path d="M26 0l11 10M25 10L36 1" stroke="#7a7c7e" stroke-width="1"/><path d="M21 0h3v12h-3z" fill="#3a3d40"/><path d="M0 12L37 9V21H0z" fill="#66696c"/><path d="M0 6l2 0 9 15H6z" fill="#9c9ea0"/><g transform="translate(3 1) scale(0.8)"><path d="M1 1h19v15H2z" fill="#a6221d"/><path d="M2 1h17v3H2z" fill="#2a2020"/><path d="M4 10h4v2H4zM15 10h3v2h-3z" fill="#e6e6e6"/><path d="M9 11h5v2H9z" fill="#9ad29a"/></g><path d="M0 3h4v6H0z" fill="#c7d3da"/><path d="M1.5 18.2h3.5M6 18.2h4M11 18.2h3M15.5 18.2h3M20 18.2h3M24 18.2h3.5" stroke="#e4e4e4" stroke-width="1.1"/></svg>
<svg class="abs" style="left:857px;top:714.0999999999999px" width="37" height="21" viewBox="0 0 37 21"><rect width="37" height="21" fill="#c3c1bc"/><path d="M0 0h37v5.5H0z" fill="#4a6aa6"/><path d="M0 5.5h37v1.5H0z" fill="#aab4c0"/><path d="M0 9l37-3" stroke="#9c9e9f" stroke-width="0.8"/><path d="M2.5 5h1.2v13H2.5z" fill="#6a6c6e"/><path d="M24 20l9-13" stroke="#7d7f81" stroke-width="0.8"/><path d="M0 14l37-2" stroke="#b1b0ab" stroke-width="1.5"/><path d="M14 2h15v10H14z" fill="#2c58a6"/><path d="M15 12h13v3H15z" fill="#333"/><path d="M29 5h8v10h-8z" fill="#7c7f82"/><path d="M1.5 18.2h3.5M6 18.2h4M11 18.2h3M15.5 18.2h3M20 18.2h3M24 18.2h3.5" stroke="#e4e4e4" stroke-width="1.1"/></svg>
<div class="abs" style="left:905.1px;top:714.4px;width:19.8px;height:17px;border:1.2px solid #6cb3dc;border-radius:1px"></div>
<svg class="abs" style="left:911.6px;top:719.8px" width="7" height="6" viewBox="0 0 7 6"><path d="M1.6 0.3h3.8v1.6H1.6z" fill="#3d8fd6"/><path d="M0.3 2h6.4v2.6H5.6V3.6H1.4v1H0.3z" fill="#3d8fd6"/><path d="M1.6 4h3.8v1.8H1.6z" fill="#3d8fd6"/></svg>
<div class="abs" style="left:936.1px;top:714.4px;width:19.8px;height:17px;border:1.2px solid #6cb3dc;border-radius:1px"></div>
<svg class="abs" style="left:942.9px;top:719.5999999999999px" width="7" height="7" viewBox="0 0 7 7"><circle cx="2.9" cy="2.9" r="2.1" fill="none" stroke="#3d8fd6" stroke-width="1.2"/><path d="M4.5 4.5l2 2" stroke="#3d8fd6" stroke-width="1.4"/></svg>
<div class="abs" style="left:55px;top:709.3px;width:909px;height:1px;background:rgba(240,240,236,0.9)"></div>
<div class="abs" style="left:109px;top:741.4px;width:855px;height:33.30000000000007px;background:#fff4cf"></div>
<div class="abs" style="left:55px;top:741.4px;width:54px;height:33.30000000000007px;background:#f6f8fb"></div>
<div class="t" style="left:61.33px;top:748.40px;font-size:8.8px;color:#5c5c5c;font-weight:normal;transform:scaleX(0.951);transform-origin:0 0;">22.11.2018</div>
<div class="t" style="left:66.28px;top:759.10px;font-size:8.8px;color:#5c5c5c;font-weight:normal;transform:scaleX(0.920);transform-origin:0 0;">06:33:21</div>
<div class="t" style="left:115.98px;top:748.40px;font-size:8.8px;color:rgba(20,24,0,0.72);font-weight:normal;transform:scaleX(0.915);transform-origin:0 0;">000218</div>
<div class="t" style="left:266.63px;top:748.40px;font-size:8.8px;color:rgba(20,24,0,0.72);font-weight:normal;transform:scaleX(0.923);transform-origin:0 0;">О120ЕУ152</div>
<div class="abs" style="left:264.7px;top:758.3px;width:44.4px;height:11.5px;background:#21ae90;border-radius:1px"></div>
<div class="t" style="left:268.55px;top:760.17px;font-size:8.6px;color:#fff;font-weight:normal;transform:scaleX(0.837);transform-origin:0 0;">Завершить</div>
<div class="t" style="left:378.12px;top:748.40px;font-size:8.8px;color:rgba(20,24,0,0.72);font-weight:normal;transform:scaleX(0.890);transform-origin:0 0;">БРУТТО</div>
<div class="t" style="left:428.27px;top:748.40px;font-size:8.8px;color:rgba(20,24,0,0.72);font-weight:normal;transform:scaleX(0.930);transform-origin:0 0;">23.87</div>
<div class="t" style="left:476.00px;top:748.40px;font-size:8.8px;color:rgba(20,24,0,0.72);font-weight:normal;transform:scaleX(0.954);transform-origin:0 0;">Автофиксация</div>
<div class="t" style="left:478.94px;top:759.10px;font-size:8.8px;color:rgba(20,24,0,0.72);font-weight:normal;transform:scaleX(0.901);transform-origin:0 0;">после съезда</div>
<div class="t" style="left:552.40px;top:748.40px;font-size:8.8px;color:rgba(20,24,0,0.72);font-weight:normal;transform:scaleX(0.989);transform-origin:0 0;">Взвешивание</div>
<div class="t" style="left:633.71px;top:748.40px;font-size:8.8px;color:rgba(20,24,0,0.72);font-weight:normal;transform:scaleX(0.930);transform-origin:0 0;">0</div>
<div class="t" style="left:672.27px;top:748.40px;font-size:8.8px;color:rgba(20,24,0,0.72);font-weight:normal;transform:scaleX(0.930);transform-origin:0 0;">23.87</div>
<div class="t" style="left:727.21px;top:748.40px;font-size:8.8px;color:rgba(20,24,0,0.72);font-weight:normal;transform:scaleX(0.930);transform-origin:0 0;">0</div>
<div class="t" style="left:774.54px;top:748.40px;font-size:8.8px;color:rgba(20,24,0,0.72);font-weight:normal;">0</div>
<svg class="abs" style="left:807.9px;top:746.1999999999999px" width="37" height="21" viewBox="0 0 37 21"><rect width="37" height="21" fill="#4f5255"/><path d="M0 0h37v2.5H0z" fill="#2a2e32"/><path d="M9 1h12v8H9z" fill="#c9dae6"/><path d="M21 0h16v10H21z" fill="#cfcac0"/><path d="M22 0l15 10M23 10L36 0" stroke="#4d5052" stroke-width="1.2"/><path d="M0 2h9v8H0z" fill="#3d4145"/><path d="M0 10L37 9V21H0z" fill="#616467"/><path d="M3 10l2 0 9 11H10z" fill="#8f9193"/><path d="M14 12l23 3M16 15l21 4" stroke="#7a7c7e" stroke-width="0.8"/><path d="M1.5 18.2h3.5M6 18.2h4M11 18.2h3M15.5 18.2h3M20 18.2h3M24 18.2h3.5" stroke="#e4e4e4" stroke-width="1.1"/></svg>
<svg class="abs" style="left:857px;top:746.1999999999999px" width="37" height="21" viewBox="0 0 37 21"><rect width="37" height="21" fill="#c3c1bc"/><path d="M0 0h37v5.5H0z" fill="#4a6aa6"/><path d="M0 5.5h37v1.5H0z" fill="#aab4c0"/><path d="M0 9l37-3" stroke="#9c9e9f" stroke-width="0.8"/><path d="M2.5 5h1.2v13H2.5z" fill="#6a6c6e"/><path d="M24 20l9-13" stroke="#7d7f81" stroke-width="0.8"/><path d="M0 14l37-2" stroke="#b1b0ab" stroke-width="1.5"/><path d="M16 4h12v9H16z" fill="#d9cdb0"/><path d="M26 4h4v9h-4z" fill="#555"/><path d="M17 13h10v2H17z" fill="#444"/><path d="M1.5 18.2h3.5M6 18.2h4M11 18.2h3M15.5 18.2h3M20 18.2h3M24 18.2h3.5" stroke="#e4e4e4" stroke-width="1.1"/></svg>
<div class="abs" style="left:905.1px;top:746.5px;width:19.8px;height:17px;border:1.2px solid #6cb3dc;border-radius:1px"></div>
<svg class="abs" style="left:911.6px;top:751.9px" width="7" height="6" viewBox="0 0 7 6"><path d="M1.6 0.3h3.8v1.6H1.6z" fill="#3d8fd6"/><path d="M0.3 2h6.4v2.6H5.6V3.6H1.4v1H0.3z" fill="#3d8fd6"/><path d="M1.6 4h3.8v1.8H1.6z" fill="#3d8fd6"/></svg>
<div class="abs" style="left:936.1px;top:746.5px;width:19.8px;height:17px;border:1.2px solid #6cb3dc;border-radius:1px"></div>
<svg class="abs" style="left:942.9px;top:751.6999999999999px" width="7" height="7" viewBox="0 0 7 7"><circle cx="2.9" cy="2.9" r="2.1" fill="none" stroke="#3d8fd6" stroke-width="1.2"/><path d="M4.5 4.5l2 2" stroke="#3d8fd6" stroke-width="1.4"/></svg>
<div class="abs" style="left:55px;top:741.4px;width:909px;height:1px;background:rgba(240,240,236,0.9)"></div>
<div class="abs" style="left:109px;top:774.7px;width:855px;height:33.299999999999955px;background:#c7e77a"></div>
<div class="abs" style="left:55px;top:774.7px;width:54px;height:33.299999999999955px;background:#f6f8fb"></div>
<div class="t" style="left:61.33px;top:781.70px;font-size:8.8px;color:#5c5c5c;font-weight:normal;transform:scaleX(0.951);transform-origin:0 0;">22.11.2018</div>
<div class="t" style="left:66.28px;top:792.40px;font-size:8.8px;color:#5c5c5c;font-weight:normal;transform:scaleX(0.916);transform-origin:0 0;">06:25:54</div>
<div class="t" style="left:115.98px;top:781.70px;font-size:8.8px;color:rgba(20,24,0,0.72);font-weight:normal;transform:scaleX(0.915);transform-origin:0 0;">000216</div>
<div class="abs" style="left:155.55px;top:778.2px;width:97.5px;height:14px;background:#4a535c;border-radius:1px"></div>
<div class="t" style="left:159.36px;top:781.70px;font-size:8.8px;color:#fff;font-weight:bold;transform:scaleX(0.969);transform-origin:0 0;">000234 Перемещение</div>
<div class="t" style="left:266.63px;top:781.70px;font-size:8.8px;color:rgba(20,24,0,0.72);font-weight:normal;transform:scaleX(0.928);transform-origin:0 0;">О120ВУ152</div>
<div class="t" style="left:332.29px;top:781.70px;font-size:8.8px;color:rgba(20,24,0,0.72);font-weight:normal;transform:scaleX(1.006);transform-origin:0 0;">Камаз</div>
<div class="t" style="left:378.12px;top:781.70px;font-size:8.8px;color:rgba(20,24,0,0.72);font-weight:normal;transform:scaleX(0.890);transform-origin:0 0;">БРУТТО</div>
<div class="t" style="left:428.23px;top:781.70px;font-size:8.8px;color:rgba(20,24,0,0.72);font-weight:normal;transform:scaleX(0.930);transform-origin:0 0;">62.28</div>
<div class="t" style="left:485.78px;top:781.70px;font-size:8.8px;color:rgba(20,24,0,0.72);font-weight:normal;transform:scaleX(1.016);transform-origin:0 0;">Вручную</div>
<div class="t" style="left:479.75px;top:792.40px;font-size:8.8px;color:rgba(20,24,0,0.72);font-weight:normal;">оператором</div>
<div class="t" style="left:552.40px;top:781.70px;font-size:8.8px;color:rgba(20,24,0,0.72);font-weight:normal;transform:scaleX(0.989);transform-origin:0 0;">Взвешивание</div>
<div class="t" style="left:625.59px;top:781.70px;font-size:8.8px;color:rgba(20,24,0,0.72);font-weight:normal;transform:scaleX(0.930);transform-origin:0 0;">17.14</div>
<div class="t" style="left:672.23px;top:781.70px;font-size:8.8px;color:rgba(20,24,0,0.72);font-weight:normal;transform:scaleX(0.930);transform-origin:0 0;">62.28</div>
<div class="t" style="left:719.31px;top:781.70px;font-size:8.8px;color:rgba(20,24,0,0.72);font-weight:normal;transform:scaleX(0.930);transform-origin:0 0;">45.14</div>
<div class="t" style="left:774.54px;top:781.70px;font-size:8.8px;color:rgba(20,24,0,0.72);font-weight:normal;">0</div>
<svg class="abs" style="left:807.9px;top:779.5px" width="37" height="21" viewBox="0 0 37 21"><rect width="37" height="21" fill="#4f5255"/><path d="M0 0h37v2.5H0z" fill="#2a2e32"/><path d="M9 1h12v8H9z" fill="#c9dae6"/><path d="M21 0h16v10H21z" fill="#cfcac0"/><path d="M22 0l15 10M23 10L36 0" stroke="#4d5052" stroke-width="1.2"/><path d="M0 2h9v8H0z" fill="#3d4145"/><path d="M0 10L37 9V21H0z" fill="#616467"/><path d="M3 10l2 0 9 11H10z" fill="#8f9193"/><path d="M14 12l23 3M16 15l21 4" stroke="#7a7c7e" stroke-width="0.8"/><path d="M3 4h6v7H3z" fill="#9a2420"/><path d="M1.5 18.2h3.5M6 18.2h4M11 18.2h3M15.5 18.2h3M20 18.2h3M24 18.2h3.5" stroke="#e4e4e4" stroke-width="1.1"/></svg>
<svg class="abs" style="left:857px;top:779.5px" width="37" height="21" viewBox="0 0 37 21"><rect width="37" height="21" fill="#c3c1bc"/><path d="M0 0h37v5.5H0z" fill="#4a6aa6"/><path d="M0 5.5h37v1.5H0z" fill="#aab4c0"/><path d="M0 9l37-3" stroke="#9c9e9f" stroke-width="0.8"/><path d="M2.5 5h1.2v13H2.5z" fill="#6a6c6e"/><path d="M24 20l9-13" stroke="#7d7f81" stroke-width="0.8"/><path d="M0 14l37-2" stroke="#b1b0ab" stroke-width="1.5"/><path d="M1.5 18.2h3.5M6 18.2h4M11 18.2h3M15.5 18.2h3M20 18.2h3M24 18.2h3.5" stroke="#e4e4e4" stroke-width="1.1"/></svg>
<div class="abs" style="left:905.1px;top:779.8000000000001px;width:19.8px;height:17px;border:1.2px solid #6cb3dc;border-radius:1px"></div>
<svg class="abs" style="left:911.6px;top:785.2px" width="7" height="6" viewBox="0 0 7 6"><path d="M1.6 0.3h3.8v1.6H1.6z" fill="#3d8fd6"/><path d="M0.3 2h6.4v2.6H5.6V3.6H1.4v1H0.3z" fill="#3d8fd6"/><path d="M1.6 4h3.8v1.8H1.6z" fill="#3d8fd6"/></svg>
<div class="abs" style="left:936.1px;top:779.8000000000001px;width:19.8px;height:17px;border:1.2px solid #6cb3dc;border-radius:1px"></div>
<svg class="abs" style="left:942.9px;top:785.0px" width="7" height="7" viewBox="0 0 7 7"><circle cx="2.9" cy="2.9" r="2.1" fill="none" stroke="#3d8fd6" stroke-width="1.2"/><path d="M4.5 4.5l2 2" stroke="#3d8fd6" stroke-width="1.4"/></svg>
<div class="abs" style="left:55px;top:774.7px;width:909px;height:1px;background:rgba(240,240,236,0.9)"></div>
<div class="abs" style="left:55px;top:471px;width:1px;height:45px;background:#e8ecf0"></div>
<div class="abs" style="left:55px;top:516px;width:1px;height:282px;background:#e6eaee"></div>
<div class="abs" style="left:109px;top:471px;width:1px;height:45px;background:#e8ecf0"></div>
<div class="abs" style="left:149px;top:471px;width:1px;height:45px;background:#e8ecf0"></div>
<div class="abs" style="left:149px;top:516px;width:1px;height:282px;background:rgba(255,255,255,0.55)"></div>
<div class="abs" style="left:258px;top:471px;width:1px;height:45px;background:#e8ecf0"></div>
<div class="abs" style="left:258px;top:516px;width:1px;height:282px;background:rgba(255,255,255,0.55)"></div>
<div class="abs" style="left:318px;top:471px;width:1px;height:45px;background:#e8ecf0"></div>
<div class="abs" style="left:318px;top:516px;width:1px;height:282px;background:rgba(255,255,255,0.55)"></div>
<div class="abs" style="left:372px;top:471px;width:1px;height:45px;background:#e8ecf0"></div>
<div class="abs" style="left:372px;top:516px;width:1px;height:282px;background:rgba(255,255,255,0.55)"></div>
<div class="abs" style="left:415px;top:471px;width:1px;height:45px;background:#e8ecf0"></div>
<div class="abs" style="left:415px;top:516px;width:1px;height:282px;background:rgba(255,255,255,0.55)"></div>
<div class="abs" style="left:462px;top:471px;width:1px;height:45px;background:#e8ecf0"></div>
<div class="abs" style="left:462px;top:516px;width:1px;height:282px;background:rgba(255,255,255,0.55)"></div>
<div class="abs" style="left:546px;top:471px;width:1px;height:45px;background:#e8ecf0"></div>
<div class="abs" style="left:546px;top:516px;width:1px;height:282px;background:rgba(255,255,255,0.55)"></div>
<div class="abs" style="left:614px;top:471px;width:1px;height:45px;background:#e8ecf0"></div>
<div class="abs" style="left:614px;top:516px;width:1px;height:282px;background:rgba(255,255,255,0.55)"></div>
<div class="abs" style="left:658px;top:471px;width:1px;height:45px;background:#e8ecf0"></div>
<div class="abs" style="left:658px;top:516px;width:1px;height:282px;background:rgba(255,255,255,0.55)"></div>
<div class="abs" style="left:707px;top:471px;width:1px;height:45px;background:#e8ecf0"></div>
<div class="abs" style="left:707px;top:516px;width:1px;height:282px;background:rgba(255,255,255,0.55)"></div>
<div class="abs" style="left:752px;top:471px;width:1px;height:45px;background:#e8ecf0"></div>
<div class="abs" style="left:752px;top:516px;width:1px;height:282px;background:rgba(255,255,255,0.55)"></div>
<div class="abs" style="left:802px;top:471px;width:1px;height:45px;background:#e8ecf0"></div>
<div class="abs" style="left:802px;top:516px;width:1px;height:282px;background:rgba(255,255,255,0.55)"></div>
<div class="abs" style="left:850px;top:471px;width:1px;height:45px;background:#e8ecf0"></div>
<div class="abs" style="left:850px;top:516px;width:1px;height:282px;background:rgba(255,255,255,0.55)"></div>
<div class="abs" style="left:899px;top:471px;width:1px;height:45px;background:#e8ecf0"></div>
<div class="abs" style="left:899px;top:516px;width:1px;height:282px;background:rgba(255,255,255,0.55)"></div>
<div class="abs" style="left:930px;top:471px;width:1px;height:45px;background:#e8ecf0"></div>
<div class="abs" style="left:930px;top:516px;width:1px;height:282px;background:rgba(255,255,255,0.55)"></div>
<div class="abs" style="left:964px;top:471px;width:1px;height:45px;background:#e8ecf0"></div>
<div class="abs" style="left:964px;top:516px;width:1px;height:282px;background:#e6eaee"></div>
<div class="abs" style="left:55px;top:471px;width:909px;height:1px;background:#e3e7ec"></div>
<div class="t" style="left:65.92px;top:479.63px;font-size:9px;color:#505050;font-weight:bold;transform:scaleX(0.936);transform-origin:0 0;">Дата</div>
<div class="t" style="left:65.37px;top:489.73px;font-size:9px;color:#505050;font-weight:bold;transform:scaleX(1.006);transform-origin:0 0;">и</div>
<div class="t" style="left:65.39px;top:500.63px;font-size:9px;color:#505050;font-weight:bold;transform:scaleX(0.970);transform-origin:0 0;">время</div>
<svg class="abs" style="left:102px;top:494.6px" width="4.4" height="3.2" viewBox="0 0 4.4 3.2"><path d="M0 0h4.4L2.2 3.2z" fill="#7a6cd6"/></svg>
<div class="t" style="left:119.44px;top:500.63px;font-size:9px;color:#505050;font-weight:bold;transform:scaleX(0.949);transform-origin:0 0;">№</div>
<div class="t" style="left:159.92px;top:500.63px;font-size:9px;color:#505050;font-weight:bold;transform:scaleX(0.928);transform-origin:0 0;">Документ</div>
<div class="t" style="left:268.94px;top:490.33px;font-size:9px;color:#505050;font-weight:bold;transform:scaleX(0.954);transform-origin:0 0;">Номер</div>
<div class="t" style="left:269.43px;top:500.83px;font-size:9px;color:#505050;font-weight:bold;transform:scaleX(0.798);transform-origin:0 0;">ТС</div>
<div class="t" style="left:328.44px;top:490.33px;font-size:9px;color:#505050;font-weight:bold;transform:scaleX(0.958);transform-origin:0 0;">Марка</div>
<div class="t" style="left:328.93px;top:500.83px;font-size:9px;color:#505050;font-weight:bold;transform:scaleX(0.798);transform-origin:0 0;">ТС</div>
<div class="t" style="left:383.21px;top:500.83px;font-size:9px;color:#505050;font-weight:bold;transform:scaleX(0.952);transform-origin:0 0;">Тип</div>
<div class="t" style="left:426.28px;top:500.83px;font-size:9px;color:#505050;font-weight:bold;transform:scaleX(0.882);transform-origin:0 0;">Масса</div>
<div class="t" style="left:472.41px;top:490.33px;font-size:9px;color:#505050;font-weight:bold;transform:scaleX(0.952);transform-origin:0 0;">Тип</div>
<div class="t" style="left:472.41px;top:500.83px;font-size:9px;color:#505050;font-weight:bold;transform:scaleX(0.940);transform-origin:0 0;">взвешивания</div>
<div class="t" style="left:556.45px;top:490.33px;font-size:9px;color:#505050;font-weight:bold;transform:scaleX(0.943);transform-origin:0 0;">Источник</div>
<div class="t" style="left:556.75px;top:500.83px;font-size:9px;color:#505050;font-weight:bold;transform:scaleX(0.913);transform-origin:0 0;">тары</div>
<div class="t" style="left:624.92px;top:500.83px;font-size:9px;color:#505050;font-weight:bold;transform:scaleX(0.866);transform-origin:0 0;">Тара</div>
<div class="t" style="left:668.97px;top:500.83px;font-size:9px;color:#505050;font-weight:bold;transform:scaleX(0.904);transform-origin:0 0;">Брутто</div>
<div class="t" style="left:717.45px;top:500.83px;font-size:9px;color:#505050;font-weight:bold;transform:scaleX(0.947);transform-origin:0 0;">Нетто</div>
<div class="t" style="left:762.45px;top:500.83px;font-size:9px;color:#505050;font-weight:bold;transform:scaleX(0.934);transform-origin:0 0;">Кол.вз.</div>
<div class="t" style="left:812.72px;top:500.83px;font-size:9px;color:#505050;font-weight:bold;transform:scaleX(0.886);transform-origin:0 0;">Фото 1</div>
<div class="t" style="left:861.02px;top:500.83px;font-size:9px;color:#505050;font-weight:bold;transform:scaleX(0.903);transform-origin:0 0;">Фото 2</div>
<svg class="abs" style="left:142.3px;top:490.5px" width="4" height="7" viewBox="0 0 4 7"><path d="M0 3L2 0 4 3zM0 4L2 7 4 4z" fill="#d4d8dc"/></svg>
<svg class="abs" style="left:364.3px;top:490.5px" width="4" height="7" viewBox="0 0 4 7"><path d="M0 3L2 0 4 3zM0 4L2 7 4 4z" fill="#d4d8dc"/></svg>
<svg class="abs" style="left:408px;top:490.5px" width="4" height="7" viewBox="0 0 4 7"><path d="M0 3L2 0 4 3zM0 4L2 7 4 4z" fill="#d4d8dc"/></svg>
<svg class="abs" style="left:538px;top:490.5px" width="4" height="7" viewBox="0 0 4 7"><path d="M0 3L2 0 4 3zM0 4L2 7 4 4z" fill="#d4d8dc"/></svg>
<svg class="abs" style="left:606px;top:490.5px" width="4" height="7" viewBox="0 0 4 7"><path d="M0 3L2 0 4 3zM0 4L2 7 4 4z" fill="#d4d8dc"/></svg>
</div></body></html>
